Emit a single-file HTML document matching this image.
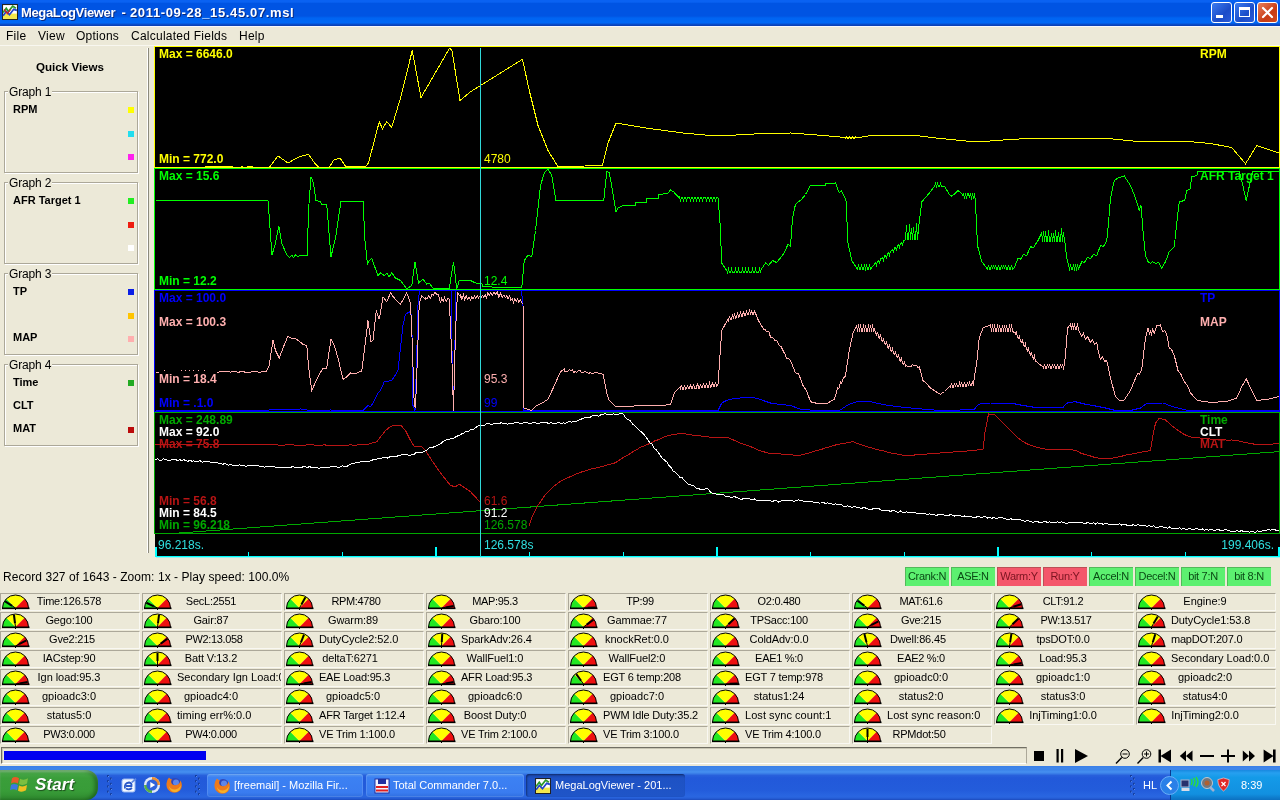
<!DOCTYPE html><html><head><meta charset="utf-8"><title>MegaLogViewer</title><style>
*{box-sizing:border-box}
html,body{margin:0;padding:0}
body{will-change:transform;-webkit-font-smoothing:antialiased;width:1280px;height:800px;position:relative;overflow:hidden;background:#ece9d8;font-family:"Liberation Sans",sans-serif;font-size:12px;color:#000}
.abs{position:absolute}
#title{left:0;top:0;width:1280px;height:26px;background:linear-gradient(180deg,#0a62f2 0,#0a62f2 2px,#0054e3 3.5px,#0054e3 16px,#0064f2 18px,#0068f6 23px,#0850d0 24px,#0a3cb0 26px)}
#title .t{left:21px;top:5px;color:#fff;font-weight:bold;font-size:13px;letter-spacing:0.37px;white-space:nowrap;text-shadow:1px 1px 0 #0a2a80}
.wb{top:2px;width:21px;height:21px;border:1px solid #fff;border-radius:3px;background:linear-gradient(135deg,#3c7cf0,#1c4cc8 60%,#2a5ad8)}
.wb.close{background:linear-gradient(135deg,#e8805c,#c83c14 60%,#d04a20)}
#menu{left:0;top:26px;width:1280px;height:20px;background:#ece9d8;border-top:1px solid #f6f7fc}
#menu span{position:absolute;top:2px;font-size:12px;white-space:nowrap;letter-spacing:0.25px}
#side{left:0;top:46px;width:155px;height:512px;background:#ece9d8}
.gb{position:absolute;left:4px;width:134px;height:82px;border:1px solid #aca899;box-shadow:1px 1px 0 #fff, inset 1px 1px 0 #fff}
.gb .ttl{position:absolute;left:3px;top:-7px;background:#ece9d8;padding:0 1px;font-size:12px;letter-spacing:-0.15px;line-height:14px;white-space:nowrap}
.gb .it{position:absolute;left:8px;font-weight:bold;font-size:11px;line-height:12px;white-space:nowrap}
.gb .sq{position:absolute;left:123px;width:6px;height:6px}
.lbl{position:absolute;font-weight:bold;font-size:12px;line-height:12px;white-space:nowrap}
.val{position:absolute;font-size:12px;line-height:12px;white-space:nowrap}
#status{left:3px;top:570px;font-size:12px;line-height:14px;white-space:nowrap;letter-spacing:0.055px}
.flag{position:absolute;top:567px;width:44px;height:19px;font-size:11px;line-height:19px;text-align:center;white-space:nowrap;overflow:hidden;letter-spacing:-0.3px;box-shadow:inset 1px 1px 0 rgba(60,60,40,.3)}
.cell{position:absolute;width:140px;height:18px;border-top:1px solid #aca899;border-left:1px solid #aca899;border-bottom:1px solid #f9f8f2;border-right:1px solid #f9f8f2;overflow:hidden}
.cell svg{position:absolute;left:0px;top:0px}
.cell .tx{position:absolute;left:34px;top:1px;min-width:68px;width:max-content;text-align:center;font-size:11px;line-height:13px;white-space:nowrap;letter-spacing:-0.05px}
#task{left:0;top:770px;width:1280px;height:30px;background:linear-gradient(180deg,#3c84ea 0,#4690f0 2px,#3a7ee8 3.5px,#2860dc 5.5px,#2259da 8px,#235cdb 20px,#2864e0 25px,#2a66e0 27px,#2258d0 29px,#1c48b8 30px)}
.tb{position:absolute;top:4px;height:23px;border-radius:3px;background:linear-gradient(180deg,#5a9af0 0%,#3c81f3 15%,#3a7cf0 80%,#2f6ee0 100%);box-shadow:inset 0 0 0 1px rgba(255,255,255,.12);color:#fff;font-size:11px;line-height:23px;white-space:nowrap;overflow:hidden}
.tb.act{background:linear-gradient(180deg,#1a47b0 0%,#1e52c4 20%,#1f55c8 100%);box-shadow:inset 1px 1px 2px rgba(0,0,0,.4)}
.tb span{position:absolute;left:27px;top:0}
</style></head><body>
<div id="title" class="abs">
<svg class="abs" style="left:2px;top:4px" width="16" height="16" viewBox="0 0 15 15"><rect x="0.5" y="0.5" width="14" height="14" fill="#fff" stroke="#222"/><rect x="1" y="9" width="13" height="5" fill="#f4e84a"/><polyline points="1,8 4,4 6,7 10,2 13,4" fill="none" stroke="#2a9a2a" stroke-width="1.6"/><polyline points="1,11 4,7 7,10 11,5 14,6" fill="none" stroke="#2244cc" stroke-width="1.6"/><polyline points="2,5 5,9 8,5" fill="none" stroke="#d02020" stroke-width="1.2"/></svg>
<div class="abs t" style="letter-spacing:-0.35px">MegaLogViewer</div><div class="abs t" style="left:121.5px;letter-spacing:0">-</div><div class="abs t" style="left:130px;letter-spacing:0.64px">2011-09-28_15.45.07.msl</div>
<div class="abs wb" style="left:1211px"><div class="abs" style="left:4px;top:12px;width:7px;height:3px;background:#fff"></div></div>
<div class="abs wb" style="left:1234px"><div class="abs" style="left:4px;top:4px;width:11px;height:10px;border:1px solid #fff;border-top-width:3px"></div></div>
<div class="abs wb close" style="left:1257px"><svg width="19" height="19" viewBox="0 0 19 19"><path d="M5 5 L14 14 M14 5 L5 14" stroke="#fff" stroke-width="2.2" stroke-linecap="round"/></svg></div>
</div>
<div id="menu" class="abs">
<span style="left:6px">File</span>
<span style="left:38px">View</span>
<span style="left:76px">Options</span>
<span style="left:131px">Calculated Fields</span>
<span style="left:239px">Help</span>
<div class="abs" style="left:0;top:18px;width:1280px;height:1px;background:#f8f7f0"></div>
</div>
<div id="side" class="abs">
<div class="abs" style="left:0;top:14px;width:140px;text-align:center;font-weight:bold;font-size:11.6px;line-height:14px">Quick Views</div>
<div class="gb" style="top:45px"><div class="ttl">Graph 1</div>
<div class="it" style="top:11px">RPM</div>
<div class="sq" style="top:15px;background:#ffff00"></div>
<div class="sq" style="top:39px;background:#22ddee"></div>
<div class="sq" style="top:62px;background:#ff22ee"></div>
</div>
<div class="gb" style="top:136px"><div class="ttl">Graph 2</div>
<div class="it" style="top:11px">AFR Target 1</div>
<div class="sq" style="top:15px;background:#22ee22"></div>
<div class="sq" style="top:39px;background:#ee1c10"></div>
<div class="sq" style="top:62px;background:#ffffff"></div>
</div>
<div class="gb" style="top:227px"><div class="ttl">Graph 3</div>
<div class="it" style="top:11px">TP</div>
<div class="sq" style="top:15px;background:#0a1ee6"></div>
<div class="sq" style="top:39px;background:#ffc400"></div>
<div class="it" style="top:57px">MAP</div>
<div class="sq" style="top:62px;background:#ffafaf"></div>
</div>
<div class="gb" style="top:318px"><div class="ttl">Graph 4</div>
<div class="it" style="top:11px">Time</div>
<div class="sq" style="top:15px;background:#22aa22"></div>
<div class="it" style="top:34px">CLT</div>
<div class="it" style="top:57px">MAT</div>
<div class="sq" style="top:62px;background:#bb0a0a"></div>
</div>
<div class="abs" style="left:147px;top:2px;width:1px;height:505px;background:#fff"></div><div class="abs" style="left:148px;top:2px;width:1px;height:505px;background:#8c8a7c"></div>
</div>
<div class="abs" style="left:155px;top:47px;width:1125px;height:510px;background:#000"></div>
<svg class="abs" style="left:0;top:0" width="1280" height="800" viewBox="0 0 1280 800" shape-rendering="crispEdges">
<defs><clipPath id="gc"><rect x="154" y="46" width="1126" height="512"/></clipPath></defs>
<g clip-path="url(#gc)"><g transform="translate(0.5,0.5)">
<polyline points="172,533 1280,451" fill="none" stroke="#00a800" stroke-width="1" />
<polyline points="155,444.2 159.13,443.66 163.26,443.76 167.39,444.27 171.52,444.13 175.65,443.47 179.78,443.75 183.91,443.84 188.04,443.68 192.17,443.54 196.3,443.68 200.43,444.09 204.57,443.4 208.7,443.95 212.83,443.84 216.96,443.43 221.09,443.76 225.22,444.06 229.35,443.96 233.48,443.52 237.61,444.45 241.74,444.27 245.87,444.46 250,443.6 254.13,443.81 258.26,443.63 262.39,444.41 266.52,443.94 270.65,443.85 274.78,444.18 278.91,444.72 283.04,444.67 287.17,444.15 291.3,444.08 295.43,444.9 299.57,444.59 303.7,444.77 307.83,444.2 311.96,444.21 316.09,444.88 320.22,444.66 324.35,444.36 328.48,445.26 332.61,445 336.74,445.21 340.87,444.54 345,445.36 349.5,444.32 354,444.86 358.5,444.2 363,443.84 367.5,443.75 376.25,441.25 385,430 390,426 393.75,424.5 400,424.5 405,430 409,438 413.75,446.25 421.25,446.25 425,450 432,461 440,472.5 450,485 455,486.25 458.75,483.75 470,491.25 481,503" fill="none" stroke="#b81414" stroke-width="1" />
<polyline points="528.75,525.03 532,515.26 537.5,504.86 545,493.78 552.5,486.27 560,480.84 565,478.39 570,476.05 575,473.86 580,471.82 585,470.26 590,468.63 594,467.99 598,466.79 602,466 606.33,464.64 610.67,463.57 615,462.21 619,459.6 623,456.71 627.75,454.26 632.5,451.28 640,446.81 645,444.73 650,442.76 654,440.51 658,439.19 662.75,436.96 667.5,435 675,433.7 682.5,432.94 686.67,433.67 690.83,434.45 695,435.29 700,435.41 705,436.2 710,436.62 714.38,436.83 718.75,436.94 723.12,437.16 727.5,437.23 731.75,439.03 736,440.74 740.5,442.89 745,444.35 749,445.8 753,447.25 757,449.2 762.25,450.97 767.5,452.6 771.88,452.74 776.25,453.1 780.62,453.5 785,453.98 789.17,454.13 793.33,454.63 797.5,454.86 801.67,454.28 805.83,453.28 810,452.03 815,450.35 820,449.28 825,447.39 830,446.08 835,444.53 840,443.43 844.17,442.73 848.33,442 852.5,441.07 856.67,442.84 860.83,444.12 865,445.86 870,447.13 875,448.69 880,449.73 885,450.96 890,452.38 895,453.17 900,454.22 905,455.02 910,454.82 915,454.43 920,454.13 924.38,453.85 928.75,453.18 933.12,452.77 937.5,452.79 942,451.99 946.5,452.03 951,451.69 955.5,451.03 960,451.2 964.5,450.79 969,450.18 973.5,449.79 978,449.39 982.5,448.53 984.5,432.01 988,413.5 993.75,413.95 998.12,418.31 1002.5,422.7 1009,429.05 1015,435.24 1021,440.11 1027.5,443.87 1031.75,445.21 1036,446.72 1040.5,447.65 1045,448.67 1050,448.6 1055,449.12 1060,449.04 1065,449.24 1070,449.41 1075,449.61 1081,452.99 1087.5,454.7 1095,457.18 1102.5,458.15 1110,458 1115,457.02 1120,456.1 1125,454.61 1130,453.89 1135,452.73 1140,451.74 1145,450.86 1150,450.14 1152.5,434.82 1155,422.64 1158.75,417.79 1165,419.5 1171,424.93 1177.5,429.99 1184,434.11 1190,436.41 1195,436.95 1200,437.59 1205,437.87 1210,438.54 1214.17,438.81 1218.33,439.31 1222.5,439.26 1226.67,439.62 1230.83,439.5 1235,439.74 1240,440.86 1245,442.1 1250,442.99 1255,443.86 1259.17,443.79 1263.33,444.09 1267.5,444.23 1271.67,443.65 1275.83,442.85 1280,442.5" fill="none" stroke="#b81414" stroke-width="1" />
<polyline points="155,459.46 157.02,458.29 159.05,459.78 161.07,459.79 163.1,458.21 165.12,459.09 167.14,459.83 169.17,460.18 171.19,459.33 173.21,459.08 175.24,459.06 177.26,460.47 179.29,459.23 181.31,459.98 183.33,459.27 185.36,460.04 187.38,460.9 189.4,459.51 191.43,460.83 193.45,460.35 195.48,461.11 197.5,460.87 199.56,460.25 201.62,461.69 203.68,461.18 205.74,460.59 207.79,460.78 209.85,461.9 211.91,462.06 213.97,462.03 216.03,461.97 218.09,462.57 220.15,462.76 222.21,463.94 224.26,462.66 226.32,464.25 228.38,464.64 230.44,463.58 232.5,465.27 234.58,464.98 236.67,465.42 238.75,464.41 240.83,464.66 242.92,464.79 245,465.98 247.08,465.34 249.17,465.03 251.25,465.25 253.33,465.07 255.42,464.76 257.5,464.95 259.58,466.37 261.67,465.48 263.75,466.74 265.83,465.6 267.92,465.73 270,466.27 272.04,465.72 274.07,466.08 276.11,467.15 278.15,467.05 280.19,466.95 282.22,466.65 284.26,467.19 286.3,467.27 288.33,466.59 290.37,466.92 292.41,465.74 294.44,467 296.48,466.52 298.52,467.09 300.56,466.93 302.59,466.31 304.63,465.91 306.67,467.52 308.7,466.11 310.74,466.76 312.78,466.55 314.81,466.5 316.85,467.32 318.89,467.77 320.93,466.51 322.96,467.25 325,466.64 327.14,467 329.29,466.6 331.43,466.08 333.57,465.96 335.71,465.94 337.86,467.09 340,466.24 342.19,465.28 344.38,466.04 346.56,465.74 348.75,464.28 350.94,463.26 353.12,462.88 355.31,462.23 357.5,462.22 359.69,461.3 361.88,461.09 364.06,460.66 366.25,460.75 368.44,460.85 370.62,460.14 372.81,459.06 375,458.59 377.08,458.48 379.17,457.9 381.25,457.52 383.33,456.71 385.42,456.79 387.5,457.72 389.58,455.89 391.67,456.26 393.75,456.17 395.83,456.28 397.92,454.8 400,454.59 402.19,454.3 404.38,454.32 406.56,454.15 408.75,454.82 410.94,454.38 413.12,454.17 415.31,452.39 417.5,452.16 420,452.38 422.5,451.71 425,449.95 427.14,449.09 429.29,446.96 431.43,446.59 433.57,446.48 435.71,445.23 437.86,444.21 440,443.35 442.19,441.11 444.38,439.92 446.56,439.07 448.75,438.79 450.94,438.14 453.12,437.67 455.31,436.34 457.5,435.27 459.58,434.56 461.67,433.09 463.75,432.34 465.83,430.5 467.92,430.92 470,429.02 472,429.36 474,427.96 476,426.45 478,425.23 480,424.55 482,424.95 484,424.76 486,423.4 488,423.03 490,423.54 492.12,423.57 494.23,423.14 496.35,422.77 498.46,423.37 500.58,422.23 502.69,422.68 504.81,422.89 506.92,423.71 509.04,423.07 511.15,423.42 513.27,422.61 515.38,422.1 517.5,422.04 519.57,423.33 521.63,422.87 523.7,422.15 525.76,421.64 527.83,422.5 529.89,422.81 531.96,422.36 534.02,422.06 536.09,422.8 538.15,423.27 540.22,422.01 542.28,421.66 544.35,422.21 546.41,422.36 548.48,422.83 550.54,421.96 552.61,423.03 554.67,422.93 556.74,422.51 558.8,421.97 560.87,423.35 562.93,422.16 565,423.08 567.14,421.59 569.29,421.14 571.43,421.68 573.57,420.42 575.71,421.17 577.86,419.92 580,418.94 582.5,417.92 585,417.18 587.5,416.55 589.64,416.81 591.79,415.11 593.93,415.31 596.07,414.73 598.21,415.85 600.36,414.11 602.5,413.69 604.58,413.42 606.67,413.74 608.75,414.37 610.83,414.06 612.92,413.5 615,413.7 617.5,413.89 620,413.13 622.5,413.18 625,417.03 627.5,419.19 630,420.41 632.14,423.69 634.29,425.32 636.43,427.45 638.57,429.52 640.71,431.37 642.86,433.21 645,435.85 647.14,438.66 649.29,442.43 651.43,443.61 653.57,447.8 655.71,449.12 657.86,452.06 660,455.58 662.14,458.08 664.29,459.88 666.43,461.69 668.57,464.95 670.71,467.27 672.86,470.76 675,471.95 677.14,474.04 679.29,476.79 681.43,477.01 683.57,479.48 685.71,481.99 687.86,483.69 690,484.17 692,484.91 694,485.71 696,488.01 698,487.56 700,489.2 702.5,489.47 705,488.46 707.5,488.34 710,491.7 712.5,493.21 714.58,492.95 716.67,494.14 718.75,493.79 720.83,494.1 722.92,493.98 725,495.71 727.08,496.37 729.17,496.24 731.25,497.17 733.33,495.89 735.42,496.65 737.5,497.46 739.52,498.5 741.55,498.67 743.57,497.83 745.6,497.77 747.62,498.27 749.64,498.56 751.67,499.52 753.69,498.36 755.71,499.65 757.74,499.71 759.76,500.05 761.79,500.13 763.81,500.01 765.83,499.69 767.86,499.85 769.88,500.11 771.9,501.04 773.93,499.96 775.95,500.35 777.98,501.53 780,500.8 782,500.12 784,499.71 786,500.29 788,499.54 790,500.36 792.06,500.37 794.12,500.73 796.18,499.61 798.24,499.46 800.29,499.66 802.35,500.56 804.41,501.11 806.47,500.82 808.53,500.61 810.59,501.12 812.65,501.66 814.71,501.93 816.76,502.24 818.82,502.6 820.88,502.44 822.94,501.64 825,503.11 827,502.43 829,503.22 831,503.17 833,504.13 835,503.46 837,503.85 839,504.14 841,504.28 843,505.89 845,505.64 847.02,505.4 849.05,505.74 851.07,507.03 853.1,506.37 855.12,506.09 857.14,507.34 859.17,507.28 861.19,508.1 863.21,506.71 865.24,507.6 867.26,508.43 869.29,508.68 871.31,509.03 873.33,507.67 875.36,508.34 877.38,508.24 879.4,508.58 881.43,510.21 883.45,509.72 885.48,510.56 887.5,509.77 889.58,510.87 891.67,510.33 893.75,510.19 895.83,511.33 897.92,511.84 900,510.54 902.08,511.63 904.17,511.88 906.25,511.37 908.33,511.85 910.42,511.65 912.5,511.97 914.58,512.27 916.67,513.1 918.75,513.4 920.83,512.8 922.92,512.66 925,513.44 927.06,514.17 929.12,513.39 931.18,513.72 933.24,513.63 935.29,514.8 937.35,514.45 939.41,513.68 941.47,513.86 943.53,514.49 945.59,514.87 947.65,515.13 949.71,514.25 951.76,514.48 953.82,515.54 955.88,515.13 957.94,515.01 960,515.15 962.08,516.43 964.17,515.38 966.25,515.95 968.33,515.69 970.42,515.91 972.5,516.82 974.58,517.17 976.67,516.14 978.75,515.95 980.83,517.02 982.92,516.19 985,515.94 987.08,517.67 989.17,516.92 991.25,517.74 993.33,517.11 995.42,518.08 997.5,517.43 999.58,517.1 1001.67,517.04 1003.75,518.22 1005.83,518.59 1007.92,519.28 1010,518.01 1012.08,519.18 1014.17,518.93 1016.25,519.38 1018.33,518.95 1020.42,519.4 1022.5,520.04 1024.58,520.97 1026.67,519.71 1028.75,520.61 1030.83,521.38 1032.92,521.88 1035,520.71 1037,520.63 1039,522.15 1041,522.26 1043,521.42 1045,520.7 1047,522.32 1049,521.4 1051,522.38 1053,521.92 1055,522.33 1057,521.19 1059,522.36 1061,521.4 1063,521.78 1065,522.62 1067,522.64 1069,521.53 1071,521.64 1073,522.02 1075,522.28 1077,522.09 1079,521.67 1081,521.94 1083,522.85 1085,523.22 1087,521.77 1089,522.81 1091,523.26 1093,522.07 1095,523.61 1097,522.41 1099,523.38 1101,523.39 1103,523.63 1105,523.15 1107,523.46 1109,523.85 1111,523.67 1113,524.19 1115,523.9 1117,523.99 1119,523.34 1121,524.51 1123,524.38 1125,524.02 1127,525.07 1129,525.2 1131,524.72 1133,524.32 1135,524.95 1137,524.41 1139,524.57 1141,525.24 1143,524.75 1145,525.5 1147,525.74 1149,525.01 1151,526.21 1153,525.33 1155,526.62 1157,526.82 1159,526.46 1161,525.76 1163,526.69 1165,526.58 1167,527.73 1169,526.39 1171,527.8 1173,528.17 1175,527.82 1177,528.09 1179,527.09 1181,528.63 1183,527.87 1185,528.82 1187.08,528.86 1189.17,527.62 1191.25,528.85 1193.33,529.22 1195.42,527.77 1197.5,528.4 1199.58,529.24 1201.67,528.27 1203.75,529.71 1205.83,528.71 1207.92,529.79 1210,528.69 1212.08,529.45 1214.17,530.31 1216.25,529.14 1218.33,529.35 1220.42,529.9 1222.5,529.67 1224.53,529.24 1226.56,529.58 1228.59,529.62 1230.62,531.1 1232.66,530.71 1234.69,531.18 1236.72,529.95 1238.75,531.14 1240.78,530.01 1242.81,530.84 1244.84,531.1 1246.88,530.69 1248.91,531.69 1250.94,531.19 1252.97,531.32 1255,531.94 1257.14,530.18 1259.29,531.42 1261.43,530.41 1263.57,529.63 1265.71,530 1267.86,528.68 1270,529.63 1272,529.14 1274,529 1276,529.98 1278,529.65 1280,530" fill="none" stroke="#ffffff" stroke-width="1" />
<polyline points="155,410 265,410 272,409 300,408.5 310,410 330,409.5 345,410 362.5,410 367.5,405 370,406 372.5,402.5 377.5,392.5 380,390 383.75,381.25 391.25,380 394,376 397.5,370 400,347.5 402.5,325 405,313.75 408.75,311.25 411.25,315 412.5,405 414.5,410 416.25,355 417.5,305 419,290 450.5,290 451.5,350 453,410 454.5,340 455.5,290 521,290 522.5,305 523.5,410 717.5,410 721.25,402.5 725,400.5 730,398.75 740,397.5 750,396.75 757,398 762.5,400 770,402.5 780,404 790,405 800,408.75 815,410 830,410 840,409.5 845,406 848.75,403.75 856.25,401.25 870,401.25 885,404.5 900,406.5 915,408 940,410 960,409.5 973.75,408.75 977,405 980,403 990,402.5 1010,402.5 1020,404.5 1035,407 1062.5,407 1065,404 1067.5,402 1075,401.25 1085,403.75 1095,405.5 1105,407.5 1115,410 1130,410 1140,407.5 1146.25,403 1162.5,402.5 1172.5,406.25 1185,409.5 1197.5,410 1280,410" fill="none" stroke="#0000ff" stroke-width="1" />
<polyline points="216,371.32 218,371.77 220,370.74 222,371.44 224,370.97 226,370.89 228,370.79 230,371.93 232,370.91 234,371.1 236,371.33 238,372.09 240,370.83 242,371.38 244,371.5 246,372 248,371.86 250,371.89 252,370.91 254,371.1 256,370.97 258,371.77 260,371.85 262,370.52 264,370.52 266,371 268.75,365 272.5,339.5 275,350 278.75,357.5 282.5,347.5 287.5,335.5 290,337.5 295,338 302.5,343.75 306.25,345 308.25,367.5 311.25,390 316.25,378.75 322.5,367.5 326.25,367.5 328.75,350 330.5,338.75 333.75,345 337.5,357.5 342.5,378.75 346.25,376.25 350,372.5 355,373 361.25,370.5 364.5,345 367.5,320 370.5,341.25 372.5,340 375.75,310 378.75,318.75 382.5,296.25 386.25,301.25 390,292.5 393.75,297.5 400,303.75 406.25,292.5 410,302.5 411.75,342.5 413.75,405 415,407.5 417,355 418.75,302.5 421.25,295 425,298.75 425,296.9 426.67,298.44 428.33,295.07 430,297.8 431.5,293.84 433,294.66 434.62,291.78 436.25,293.87 438.12,294.5 440,302.51 441.33,297.67 442.67,300.99 444,297.15 445.58,300.89 447.17,298.08 448.75,298.75 451.25,355 453,410 455,330 457,292.5 460,296.25 460,293.91 461.43,298.98 462.86,294.25 464.29,299.3 465.71,295.55 467.14,298.75 468.57,296.44 470,299.53 471.33,296.5 472.67,298.01 474,295.86 475.33,297.87 476.67,295.25 478,297.31 479.33,295.63 480.67,297.18 482,295.09 483.33,297.05 484.67,294.41 486,297.29 487.33,292.34 488.67,294.93 490,292.27 491.67,294.76 493.33,291.7 495,293.96 496.67,291.02 498.33,296.79 500,292.82 501.67,296.72 503.33,294.62 505,296.91 506.33,295.16 507.67,298.42 509,295.31 510.33,299.37 511.67,298.17 513,302.2 514.33,298.02 515.67,301.17 517,298.66 518.33,301.59 519.67,299.36 521,301.5 522.5,303.75 523.5,407.5 531.25,410 536.25,405 541,403 547.5,398.75 555,382.5 560,371.25 563.75,368.75 564,371.22 565.57,371.02 567.14,370.63 568.71,369.28 570.29,369.88 571.86,369.37 573.43,371.76 575,371.12 576.43,371.86 577.86,370.1 579.29,369.57 580.71,371.55 582.14,372.03 583.57,371.41 585,371.1 586.67,372.15 588.33,372.86 590,372.02 591.57,373.13 593.14,372.62 594.71,371.52 596.29,371.59 597.86,372.56 599.43,372.56 601,373.5 602.5,373.75 606.25,392.5 608.75,400 615,406.25 616,406.19 619,406.39 622,405.82 625,406.25 628,406.24 631,406.14 634,405.49 637,405.28 640,405.23 643,405.1 646,405 649,405.32 652,405.5 655,405.34 658,404.88 661,404.95 664,405 667,404.18 670,404.5 673.75,392.5 676,390 680,386.25 680,389 681,384.5 682,388.8 683,388.8 684,384.7 685,388.6 686,388.5 687,384.2 688,388.4 689,388.3 690,383.9 691,388.1 692,388 693,383.2 694,387.9 696,387.7 697,382.4 698,387.5 699,387.5 700,383.2 701,387.3 702,387.2 703,382.2 704,387.1 705,387 706,382.7 707,386.8 708,386.7 709,382.8 710,386.6 711,386.5 712,381.6 713,386.3 714,386.2 715,381.3 716,386.1 717.5,383.75 719.5,355 721.25,330 724,325 727.5,318.75 728,320 729,315.4 730,319.4 731,319 732,314 733,318.4 733,318.4 734,312.4 735,317.7 736,317.4 737,311.3 738,316.8 739,316.4 740,310.4 741,315.8 742,315.5 743,310.8 744,314.8 745,314.5 746,309.9 747,314.4 748,314.4 749,308.6 750,314.2 750,314.2 751,309.7 752,314.1 753,314.1 754,309.8 755,314 755,312 757,318 759,322 762.5,327.5 763,328.63 764.4,328.8 765.8,330.99 767.2,330.72 768.6,331.66 770,336.88 771.5,336.85 773,337.61 774.5,340.48 776,339.74 777.5,342.74 778.96,345.35 780.42,345.68 781.88,348.63 783.33,351.59 784.79,354.17 786.25,358.35 788.12,358.04 790,360 795,372.5 798,373 802.5,385 806,390 810,401.25 815,402.5 827.5,402.5 833.75,398.75 836,392 836,392 837,387.5 838,388.2 839,386.3 840,381.6 841,382.6 842,380.7 843,376.6 844,376.9 845,375 848.75,350 852.5,332.5 856.25,325 857,331 858,323.6 859,331 859,331 860,323.7 861,331 862,331 863,323.9 864,331 864,331 865,324.4 866,331 867,331 868,323.7 869,331 869,331 870,324.5 871,331 871,331 872,323.8 873,331 873,331 874,327.9 875,333.2 876,334.3 877,331.2 878,336.5 879,337.6 880,333.7 881,339.8 882,340.8 883,337.6 884,343 885,344.1 886,340.5 887,346.3 888,347.4 889,343.5 890,349.6 891,350.7 892,348 893,352.9 894,354 895,350.3 896,356.2 897,357.2 898,354.1 899,359.4 900,360.5 901,357.7 902,362.7 903,363.8 904,360.7 905,366 905,365 906,365.48 907.5,365.81 909,365.67 910.5,366.1 912,363.82 913.35,365.43 914.7,364.75 916.05,365.08 917.4,366.82 918.75,366.25 922.5,380 926,383 930,387.5 935,391 940,393.75 944,391 950,385 950,387 951,382.7 952,386.8 953,386.7 954,382.5 955,386.6 955,386.6 956,382.6 957,386.4 958,386.3 959,382.6 960,386.1 960,386.1 961,381.7 962,386 963,385.9 964,381.7 965,385.7 966,385.6 967,381.3 968,385.4 968,385.4 969,381.1 970,385.3 971,385.2 972,381.1 973,385 973.75,377.5 976.25,362.5 978.75,337.5 982.5,327.5 986,326 990,324.5 991,331 992,323.7 993,331 993,331 994,323.9 995,331 996,331 997,323.8 998,331 998,331 999,324.5 1000,331 1001,331 1002,324.1 1003,331 1003,331 1004,324.4 1005,331 1005,331 1006,324.5 1007,331 1008,331 1009,323.4 1010,331 1010,331 1011,323.9 1012,331 1015,332.5 1015,334 1016,332.1 1017,336.7 1018,338.1 1019,336 1020,340.8 1021,342.1 1022,339.1 1023,344.8 1024,346.1 1025,343.2 1026,348.9 1027,350.2 1028,347.6 1029,352.9 1030,354.2 1031,351.2 1032,356.9 1033,358.3 1034,355.5 1035,361 1035,360 1038,363 1042.5,366.25 1043,367.5 1044,363.5 1045,367.5 1046,367.5 1047,363.5 1048,367.5 1048,367.5 1049,363.5 1050,367.5 1051,367.5 1052,363.5 1053,367.5 1053,367.5 1054,363.5 1055,367.5 1056,367.5 1057,363.5 1058,367.5 1059,367.5 1060,363.5 1061,367.5 1061,367.5 1062,363.5 1063,367.5 1063.75,365 1065,355 1067,327.5 1070,323.75 1071,329 1072,323 1073,329 1073,329 1074,323 1075,329 1076,329 1077,323 1078,329 1081.25,336.25 1083,333 1085,339 1087,336 1090,342 1092,339 1094,343.5 1096.25,342 1098,352 1100,358.75 1102,356 1104,361 1106.25,360 1108,368 1110,377.5 1115,396.25 1118.75,400 1123.75,399.5 1130,390 1134,380 1137.5,372.5 1139,374 1141.25,368.75 1145,337.5 1147.5,327.5 1149,334 1150,330 1151,335 1152,328.75 1153.75,332.5 1156.25,325 1160,324.5 1162,331.25 1164,330 1166.25,333.75 1168.75,347.5 1171,349 1173.75,355 1177.5,370 1180,373 1183.75,381.25 1187,385 1190,392.5 1196.25,399.5 1203,401 1210,401.75 1225,401.25 1236.25,397.5 1241.25,386.25 1245.75,378.25 1250,387.5 1256.25,400 1267.5,398.75 1280,395.5" fill="none" stroke="#ffafaf" stroke-width="1" />
<polyline points="155,372 158,372" fill="none" stroke="#ffafaf" stroke-width="1" />
<polyline points="163,370 164,370" fill="none" stroke="#ffafaf" stroke-width="1" />
<polyline points="180,370 181,370" fill="none" stroke="#ffafaf" stroke-width="1" />
<polyline points="184,370 185,370" fill="none" stroke="#ffafaf" stroke-width="1" />
<polyline points="188,370 189,370" fill="none" stroke="#ffafaf" stroke-width="1" />
<polyline points="192,370 193,370" fill="none" stroke="#ffafaf" stroke-width="1" />
<polyline points="197,370 198,370" fill="none" stroke="#ffafaf" stroke-width="1" />
<polyline points="203,370 204,370" fill="none" stroke="#ffafaf" stroke-width="1" />
<polyline points="155,200 267.5,200 271.5,254.5 275,242.5 278.25,225.5 281.25,242.5 286.25,254.5 289,257 291.25,254.5 293,257 295,254.5 297.5,256 300,254.5 306.75,254.5 308,210 310.5,176.25 313,182.5 315.5,200 320,201 321.25,203.75 326.25,204.5 330.5,256.25 335,237.5 340.5,200.5 362.5,200.5 364.5,240 367,263.75 368.75,260 371.25,257.5 373.75,265 377.5,275 380,272.5 383.75,275 386.25,272.5 388.75,276.25 391.25,272.5 395,277.5 400,280 406.25,288.5 411.25,285 414.5,261.25 418,282.5 422.5,278.75 426.25,283.75 428.75,282.5 432.5,287.5 448.75,288 453,261.25 456.25,288.5 458.75,280 470,280 475,282.5 481.25,283 482.5,286.25 510,287 521.25,287.5 523.75,260 527.5,254.5 531.25,256.25 535,230 540,185 543.75,172.5 547.5,168.75 551.25,175 555.5,200 603.25,200 606.25,171.25 608.75,172 612,190 615.5,211.25 617.5,207.5 623.75,204.5 635,204.5 635,202 646,202 646.25,197.5 657.5,197.5 657.5,194.5 667.5,192.5 670,189.5 673,191.25 678.75,197.5 679,197 680,200 681,197 682,197 683,200 684,197 685,197 686,200 687,197 689,197 690,200 691,197 692,197 693,200 694,197 695,197 696,200 697,197 698,197 699,200 700,197 701,197 702,200 703,197 705,197 706,200 707,197 708,197 709,200 710,197 711,197 712,200 713,197 714,197 715,200 716,197 717.5,197 719.5,222.5 721.25,262.5 726.25,270 727,272 728,268.5 729,272 730,272 731,268.5 732,272 734,272 735,268.5 736,272 737,272 738,268.5 739,272 741,272 742,268.5 743,272 744,272 745,268.5 746,272 747,272 748,268.5 749,272 751,272 752,268.5 753,272 754,272 755,268.5 756,272 758,272 759,268.5 760,272 760,270 765,262.5 768,265 772,260 776,262 780,257.5 784,252 787.5,243.75 790,246 792,217.5 795,203.75 801.25,198.75 805,194 810,185 825,185 825,183 835,182.5 838.75,192.5 841,190 845.5,200 847.5,242.5 851.25,260 856.25,267.5 857,268.5 858,265 859,268.5 860,268.5 861,265 862,268.5 863,268.5 864,265 865,268.5 865,268.5 866,265 867,268.5 868,268.5 869,265 870,268.5 875,262.5 875,262.5 876,264.8 877,260.9 878,260.2 879,262.3 880,258.6 882,257 883,259.7 884,255.5 885,254.7 886,257.3 887,253.1 888,252.3 889,254.8 890,250.8 892,249.2 893,251.2 894,247.6 895,246.8 896,249.1 897,245.3 898,244.5 899,246.9 900,242.9 901,242.2 902,244.3 903,240.6 903.75,240 905,239 906,224.7 907,239 908,239 909,223.4 910,239 910,239 911,227.4 912,239 912,239 913,226.7 914,239 915,239 916,223 917,239 918.75,221.25 921.25,201.25 925,197 930,191.25 933,187 934,186 935,183 936,186 936,186 937,183 938,186 939,186 940,183 941,186 944,186 948.75,193.75 951,195.5 953.75,194 957.5,190 960,192 962.5,195 963,192.5 964,198 965,192.5 965,192.5 966,198.9 967,192.5 968,192.5 969,197.4 970,192.5 970,192.5 971,199.3 972,192.5 972,192.5 973,198.6 974,192.5 975,202.5 977,245 981.25,261.25 986.25,267.5 987,268.5 988,264.5 989,268.5 990,268.5 991,264.5 992,268.5 992,268.5 993,264.5 994,268.5 994,268.5 995,264.5 996,268.5 997,268.5 998,264.5 999,268.5 1000,268.5 1001,264.5 1002,268.5 1002,268.5 1003,264.5 1004,268.5 1004,268.5 1005,264.5 1006,268.5 1007,268.5 1008,264.5 1009,268.5 1010,268.5 1011,264.5 1012,268.5 1013.75,267.5 1017.5,257.5 1020,259 1023,254 1026.25,255 1030,246.25 1033,247 1037.5,240 1041.25,232.5 1042,241 1043,230.7 1044,241 1044,241 1045,230.7 1046,241 1047,241 1048,229.9 1049,241 1050,241 1051,232.3 1052,241 1052,241 1053,233 1054,241 1054,241 1055,230 1056,241 1057,241 1058,231.2 1059,241 1060,241 1061,227.4 1062,241 1062,241 1063,231.4 1064,241 1064.5,242.5 1066.25,257.5 1068.75,267.5 1069,268.5 1070,265 1071,268.5 1072,268.5 1073,265 1074,268.5 1074,268.5 1075,265 1076,268.5 1076,268.5 1077,265 1078,268.5 1081.25,261.25 1084,262 1087,257 1090,258 1093,254 1096.25,255 1100,245 1103,246 1106.25,240 1108,222.5 1110,197.5 1113.75,180 1117.5,177.5 1123.75,175.5 1130,185 1135,197.5 1138.75,210 1140.5,205 1142.5,230 1145,255 1147.5,261.25 1150,263 1152,261 1155,263 1158,262 1161.25,267.5 1165,261.25 1168.75,251.25 1173.75,246.25 1176.25,222.5 1178.75,201.25 1184.25,200 1186.25,190 1189.5,188.75 1191.25,176.25 1196.25,175 1197.5,171 1238.75,171 1241.25,180 1245.75,200 1250,180 1252.5,171 1280,171" fill="none" stroke="#00ff00" stroke-width="1" />
<polyline points="262,167 268.75,167 277.5,155.5 287.5,162.5 297.5,156.75 308,153.75 315,163.75 318.75,167 328.75,167 333.75,158.75 340,158.25 345,165.75 365,166.25 368,162.5 378.75,121.25 382,128.25 386.25,121.25 391.25,126.75 400,97.5 411.75,50 420.5,97 448.75,48.25 451.25,48.75 459.5,100 470,91.25 522,58.75 528.75,90 537.5,125 547.5,150 557.5,166.25 602,165 607.5,142.5 615.5,122.5 645,127.5 682.5,132.5 710,135 722.5,135.5 745,133.75 790,132.5 822.5,135 845,137 845,137.5 846,136.5 847,137.5 848,137.5 849,136.5 850,137.5 851,137.5 852,136.5 853,137.5 854,137.5 855,136.5 856,137.5 870,135 915,135 940,138 965,140.5 980,141.25 1002.5,139.5 1022.5,138.25 1110,138.25 1135,140.75 1185,140.75 1210,143 1231.25,147 1245,163.25 1256.25,145 1280,153" fill="none" stroke="#ffff00" stroke-width="1" />
<polyline points="204,166 232,166" fill="none" stroke="#ffff00" stroke-width="1" />
<polyline points="240,166 242,166" fill="none" stroke="#ffff00" stroke-width="1" />
<polyline points="246,166 252,166" fill="none" stroke="#ffff00" stroke-width="1" />
<path d="M154 167 L154 46 L1279 46 L1279 167 Z" fill="none" stroke="#ffff00"/>
<path d="M154 289 L154 168 L1279 168 L1279 289 Z" fill="none" stroke="#00ff00"/>
<path d="M154 411 L154 290 L1279 290 L1279 411 Z" fill="none" stroke="#0000ff"/>
<path d="M154 533 L154 412 L1279 412 L1279 533 Z" fill="none" stroke="#00a800"/>
<line x1="155" y1="556" x2="1280" y2="556" stroke="#00ffff"/>
<line x1="155" y1="557" x2="1280" y2="557" stroke="#9af4f0"/>
<line x1="155.5" y1="546" x2="155.5" y2="556" stroke="#00ffff" stroke-width="2"/>
<line x1="248" y1="551" x2="248" y2="556" stroke="#00ffff" stroke-width="1"/>
<line x1="342" y1="551" x2="342" y2="556" stroke="#00ffff" stroke-width="1"/>
<line x1="435" y1="546" x2="435" y2="556" stroke="#00ffff" stroke-width="2"/>
<line x1="529" y1="551" x2="529" y2="556" stroke="#00ffff" stroke-width="1"/>
<line x1="623" y1="551" x2="623" y2="556" stroke="#00ffff" stroke-width="1"/>
<line x1="716" y1="546" x2="716" y2="556" stroke="#00ffff" stroke-width="2"/>
<line x1="810" y1="551" x2="810" y2="556" stroke="#00ffff" stroke-width="1"/>
<line x1="904" y1="551" x2="904" y2="556" stroke="#00ffff" stroke-width="1"/>
<line x1="997" y1="546" x2="997" y2="556" stroke="#00ffff" stroke-width="2"/>
<line x1="1091" y1="551" x2="1091" y2="556" stroke="#00ffff" stroke-width="1"/>
<line x1="1185" y1="551" x2="1185" y2="556" stroke="#00ffff" stroke-width="1"/>
<line x1="1278.5" y1="546" x2="1278.5" y2="556" stroke="#00ffff" stroke-width="2"/>
<line x1="480" y1="47" x2="480" y2="556" stroke="#30d8d8"/>
</g></g></svg>
<div class="lbl" style="left:159px;top:48px;color:#ffff00">Max = 6646.0</div>
<div class="lbl" style="left:159px;top:153px;color:#ffff00">Min = 772.0</div>
<div class="lbl" style="left:1200px;top:48px;color:#ffff00">RPM</div>
<div class="lbl" style="left:159px;top:170px;color:#00ff00">Max = 15.6</div>
<div class="lbl" style="left:159px;top:275px;color:#00ff00">Min = 12.2</div>
<div class="lbl" style="left:1200px;top:170px;color:#00ff00">AFR Target 1</div>
<div class="lbl" style="left:159px;top:292px;color:#0000ff">Max = 100.0</div>
<div class="lbl" style="left:159px;top:316px;color:#ffafaf">Max = 100.3</div>
<div class="lbl" style="left:159px;top:373px;color:#ffafaf">Min = 18.4</div>
<div class="lbl" style="left:159px;top:397px;color:#0000ff">Min = .1.0</div>
<div class="lbl" style="left:1200px;top:292px;color:#0000ff">TP</div>
<div class="lbl" style="left:1200px;top:316px;color:#ffafaf">MAP</div>
<div class="lbl" style="left:159px;top:414px;color:#00a800">Max = 248.89</div>
<div class="lbl" style="left:159px;top:426px;color:#ffffff">Max = 92.0</div>
<div class="lbl" style="left:159px;top:438px;color:#b81414">Max = 75.8</div>
<div class="lbl" style="left:159px;top:495px;color:#b81414">Min = 56.8</div>
<div class="lbl" style="left:159px;top:507px;color:#ffffff">Min = 84.5</div>
<div class="lbl" style="left:159px;top:519px;color:#00a800">Min = 96.218</div>
<div class="lbl" style="left:1200px;top:414px;color:#00a800">Time</div>
<div class="lbl" style="left:1200px;top:426px;color:#ffffff">CLT</div>
<div class="lbl" style="left:1200px;top:438px;color:#b81414">MAT</div>
<div class="val" style="left:484px;top:153px;color:#ffff00">4780</div>
<div class="val" style="left:484px;top:275px;color:#00ff00">12.4</div>
<div class="val" style="left:484px;top:373px;color:#ffafaf">95.3</div>
<div class="val" style="left:484px;top:397px;color:#0000ff">99</div>
<div class="val" style="left:484px;top:495px;color:#b81414">61.6</div>
<div class="val" style="left:484px;top:507px;color:#ffffff">91.2</div>
<div class="val" style="left:484px;top:519px;color:#00a800">126.578</div>
<div class="val" style="left:158px;top:539px;color:#30e0e0">96.218s.</div>
<div class="val" style="left:484px;top:539px;color:#30e0e0">126.578s</div>
<div class="val" style="right:6px;top:539px;color:#30e0e0">199.406s.</div>
<div id="status" class="abs">Record 327 of 1643 - Zoom: 1x - Play speed: 100.0%</div>
<div class="flag" style="left:905px;background:#5cf070;color:#0a4a14">Crank:N</div>
<div class="flag" style="left:951px;background:#5cf070;color:#0a4a14">ASE:N</div>
<div class="flag" style="left:997px;background:#f4566a;color:#7a1420">Warm:Y</div>
<div class="flag" style="left:1043px;background:#f4566a;color:#7a1420">Run:Y</div>
<div class="flag" style="left:1089px;background:#5cf070;color:#0a4a14">Accel:N</div>
<div class="flag" style="left:1135px;background:#5cf070;color:#0a4a14">Decel:N</div>
<div class="flag" style="left:1181px;background:#5cf070;color:#0a4a14">bit 7:N</div>
<div class="flag" style="left:1227px;background:#5cf070;color:#0a4a14">bit 8:N</div>
<div class="cell" style="left:0px;top:593px"><svg width="30" height="17" viewBox="0 0 30 17"><path d="M14.5,14 L1.50,14.00 A13,13 0 0 1 5.31,4.81 Z" fill="#22e822"/><path d="M14.5,14 L5.31,4.81 A13,13 0 0 1 23.69,4.81 Z" fill="#ffff00"/><path d="M14.5,14 L23.69,4.81 A13,13 0 0 1 27.50,14.00 Z" fill="#ee1010"/><path d="M1.50,14.00 A13,13 0 0 1 27.50,14.00" fill="none" stroke="#000" stroke-width="1"/><rect x="1" y="13.5" width="27.5" height="1.6" fill="#000"/><rect x="14" y="15" width="1" height="1.5" fill="#000"/><line x1="11.12" y1="11.86" x2="4.11" y2="7.41" stroke="#000" stroke-width="2"/><line x1="14.50" y1="14.00" x2="11.12" y2="11.86" stroke="#000" stroke-width="1"/></svg><div class="tx" style="left:34px;letter-spacing:-0.204px">Time:126.578</div></div>
<div class="cell" style="left:142px;top:593px"><svg width="30" height="17" viewBox="0 0 30 17"><path d="M14.5,14 L1.50,14.00 A13,13 0 0 1 5.31,4.81 Z" fill="#22e822"/><path d="M14.5,14 L5.31,4.81 A13,13 0 0 1 23.69,4.81 Z" fill="#ffff00"/><path d="M14.5,14 L23.69,4.81 A13,13 0 0 1 27.50,14.00 Z" fill="#ee1010"/><path d="M1.50,14.00 A13,13 0 0 1 27.50,14.00" fill="none" stroke="#000" stroke-width="1"/><rect x="1" y="13.5" width="27.5" height="1.6" fill="#000"/><rect x="14" y="15" width="1" height="1.5" fill="#000"/><line x1="10.88" y1="12.30" x2="3.37" y2="8.76" stroke="#000" stroke-width="2"/><line x1="14.50" y1="14.00" x2="10.88" y2="12.30" stroke="#000" stroke-width="1"/></svg><div class="tx" style="left:34px;letter-spacing:-0.256px">SecL:2551</div></div>
<div class="cell" style="left:284px;top:593px"><svg width="30" height="17" viewBox="0 0 30 17"><path d="M14.5,14 L1.50,14.00 A13,13 0 0 1 5.31,4.81 Z" fill="#22e822"/><path d="M14.5,14 L5.31,4.81 A13,13 0 0 1 23.69,4.81 Z" fill="#ffff00"/><path d="M14.5,14 L23.69,4.81 A13,13 0 0 1 27.50,14.00 Z" fill="#ee1010"/><path d="M1.50,14.00 A13,13 0 0 1 27.50,14.00" fill="none" stroke="#000" stroke-width="1"/><rect x="1" y="13.5" width="27.5" height="1.6" fill="#000"/><rect x="14" y="15" width="1" height="1.5" fill="#000"/><line x1="16.43" y1="10.49" x2="20.43" y2="3.22" stroke="#000" stroke-width="2"/><line x1="14.50" y1="14.00" x2="16.43" y2="10.49" stroke="#000" stroke-width="1"/></svg><div class="tx" style="left:37px;letter-spacing:-0.388px">RPM:4780</div></div>
<div class="cell" style="left:426px;top:593px"><svg width="30" height="17" viewBox="0 0 30 17"><path d="M14.5,14 L1.50,14.00 A13,13 0 0 1 5.31,4.81 Z" fill="#22e822"/><path d="M14.5,14 L5.31,4.81 A13,13 0 0 1 23.69,4.81 Z" fill="#ffff00"/><path d="M14.5,14 L23.69,4.81 A13,13 0 0 1 27.50,14.00 Z" fill="#ee1010"/><path d="M1.50,14.00 A13,13 0 0 1 27.50,14.00" fill="none" stroke="#000" stroke-width="1"/><rect x="1" y="13.5" width="27.5" height="1.6" fill="#000"/><rect x="14" y="15" width="1" height="1.5" fill="#000"/><line x1="18.45" y1="13.37" x2="26.65" y2="12.08" stroke="#000" stroke-width="2"/><line x1="14.50" y1="14.00" x2="18.45" y2="13.37" stroke="#000" stroke-width="1"/></svg><div class="tx" style="left:34px;letter-spacing:-0.338px">MAP:95.3</div></div>
<div class="cell" style="left:568px;top:593px"><svg width="30" height="17" viewBox="0 0 30 17"><path d="M14.5,14 L1.50,14.00 A13,13 0 0 1 5.31,4.81 Z" fill="#22e822"/><path d="M14.5,14 L5.31,4.81 A13,13 0 0 1 23.69,4.81 Z" fill="#ffff00"/><path d="M14.5,14 L23.69,4.81 A13,13 0 0 1 27.50,14.00 Z" fill="#ee1010"/><path d="M1.50,14.00 A13,13 0 0 1 27.50,14.00" fill="none" stroke="#000" stroke-width="1"/><rect x="1" y="13.5" width="27.5" height="1.6" fill="#000"/><rect x="14" y="15" width="1" height="1.5" fill="#000"/><line x1="18.50" y1="13.81" x2="26.79" y2="13.42" stroke="#000" stroke-width="2"/><line x1="14.50" y1="14.00" x2="18.50" y2="13.81" stroke="#000" stroke-width="1"/></svg><div class="tx" style="left:37px;letter-spacing:-0.360px">TP:99</div></div>
<div class="cell" style="left:710px;top:593px"><svg width="30" height="17" viewBox="0 0 30 17"><path d="M14.5,14 L1.50,14.00 A13,13 0 0 1 5.31,4.81 Z" fill="#22e822"/><path d="M14.5,14 L5.31,4.81 A13,13 0 0 1 23.69,4.81 Z" fill="#ffff00"/><path d="M14.5,14 L23.69,4.81 A13,13 0 0 1 27.50,14.00 Z" fill="#ee1010"/><path d="M1.50,14.00 A13,13 0 0 1 27.50,14.00" fill="none" stroke="#000" stroke-width="1"/><rect x="1" y="13.5" width="27.5" height="1.6" fill="#000"/><rect x="14" y="15" width="1" height="1.5" fill="#000"/></svg><div class="tx" style="left:34px;letter-spacing:-0.312px">O2:0.480</div></div>
<div class="cell" style="left:852px;top:593px"><svg width="30" height="17" viewBox="0 0 30 17"><path d="M14.5,14 L1.50,14.00 A13,13 0 0 1 5.31,4.81 Z" fill="#22e822"/><path d="M14.5,14 L5.31,4.81 A13,13 0 0 1 23.69,4.81 Z" fill="#ffff00"/><path d="M14.5,14 L23.69,4.81 A13,13 0 0 1 27.50,14.00 Z" fill="#ee1010"/><path d="M1.50,14.00 A13,13 0 0 1 27.50,14.00" fill="none" stroke="#000" stroke-width="1"/><rect x="1" y="13.5" width="27.5" height="1.6" fill="#000"/><rect x="14" y="15" width="1" height="1.5" fill="#000"/><line x1="11.26" y1="11.65" x2="4.55" y2="6.77" stroke="#000" stroke-width="2"/><line x1="14.50" y1="14.00" x2="11.26" y2="11.65" stroke="#000" stroke-width="1"/></svg><div class="tx" style="left:34px;letter-spacing:-0.338px">MAT:61.6</div></div>
<div class="cell" style="left:994px;top:593px"><svg width="30" height="17" viewBox="0 0 30 17"><path d="M14.5,14 L1.50,14.00 A13,13 0 0 1 5.31,4.81 Z" fill="#22e822"/><path d="M14.5,14 L5.31,4.81 A13,13 0 0 1 23.69,4.81 Z" fill="#ffff00"/><path d="M14.5,14 L23.69,4.81 A13,13 0 0 1 27.50,14.00 Z" fill="#ee1010"/><path d="M1.50,14.00 A13,13 0 0 1 27.50,14.00" fill="none" stroke="#000" stroke-width="1"/><rect x="1" y="13.5" width="27.5" height="1.6" fill="#000"/><rect x="14" y="15" width="1" height="1.5" fill="#000"/><line x1="18.30" y1="12.76" x2="26.20" y2="10.20" stroke="#000" stroke-width="2"/><line x1="14.50" y1="14.00" x2="18.30" y2="12.76" stroke="#000" stroke-width="1"/></svg><div class="tx" style="left:34px;letter-spacing:-0.338px">CLT:91.2</div></div>
<div class="cell" style="left:1136px;top:593px"><svg width="30" height="17" viewBox="0 0 30 17"><path d="M14.5,14 L1.50,14.00 A13,13 0 0 1 5.31,4.81 Z" fill="#22e822"/><path d="M14.5,14 L5.31,4.81 A13,13 0 0 1 23.69,4.81 Z" fill="#ffff00"/><path d="M14.5,14 L23.69,4.81 A13,13 0 0 1 27.50,14.00 Z" fill="#ee1010"/><path d="M1.50,14.00 A13,13 0 0 1 27.50,14.00" fill="none" stroke="#000" stroke-width="1"/><rect x="1" y="13.5" width="27.5" height="1.6" fill="#000"/><rect x="14" y="15" width="1" height="1.5" fill="#000"/></svg><div class="tx" style="left:34px;letter-spacing:-0.019px">Engine:9</div></div>
<div class="cell" style="left:0px;top:612px"><svg width="30" height="17" viewBox="0 0 30 17"><path d="M14.5,14 L1.50,14.00 A13,13 0 0 1 5.31,4.81 Z" fill="#22e822"/><path d="M14.5,14 L5.31,4.81 A13,13 0 0 1 23.69,4.81 Z" fill="#ffff00"/><path d="M14.5,14 L23.69,4.81 A13,13 0 0 1 27.50,14.00 Z" fill="#ee1010"/><path d="M1.50,14.00 A13,13 0 0 1 27.50,14.00" fill="none" stroke="#000" stroke-width="1"/><rect x="1" y="13.5" width="27.5" height="1.6" fill="#000"/><rect x="14" y="15" width="1" height="1.5" fill="#000"/><line x1="14.00" y1="10.03" x2="12.96" y2="1.80" stroke="#000" stroke-width="2"/><line x1="14.50" y1="14.00" x2="14.00" y2="10.03" stroke="#000" stroke-width="1"/></svg><div class="tx" style="left:34px;letter-spacing:-0.156px">Gego:100</div></div>
<div class="cell" style="left:142px;top:612px"><svg width="30" height="17" viewBox="0 0 30 17"><path d="M14.5,14 L1.50,14.00 A13,13 0 0 1 5.31,4.81 Z" fill="#22e822"/><path d="M14.5,14 L5.31,4.81 A13,13 0 0 1 23.69,4.81 Z" fill="#ffff00"/><path d="M14.5,14 L23.69,4.81 A13,13 0 0 1 27.50,14.00 Z" fill="#ee1010"/><path d="M1.50,14.00 A13,13 0 0 1 27.50,14.00" fill="none" stroke="#000" stroke-width="1"/><rect x="1" y="13.5" width="27.5" height="1.6" fill="#000"/><rect x="14" y="15" width="1" height="1.5" fill="#000"/><line x1="15.00" y1="10.03" x2="16.04" y2="1.80" stroke="#000" stroke-width="2"/><line x1="14.50" y1="14.00" x2="15.00" y2="10.03" stroke="#000" stroke-width="1"/></svg><div class="tx" style="left:34px;letter-spacing:-0.121px">Gair:87</div></div>
<div class="cell" style="left:284px;top:612px"><svg width="30" height="17" viewBox="0 0 30 17"><path d="M14.5,14 L1.50,14.00 A13,13 0 0 1 5.31,4.81 Z" fill="#22e822"/><path d="M14.5,14 L5.31,4.81 A13,13 0 0 1 23.69,4.81 Z" fill="#ffff00"/><path d="M14.5,14 L23.69,4.81 A13,13 0 0 1 27.50,14.00 Z" fill="#ee1010"/><path d="M1.50,14.00 A13,13 0 0 1 27.50,14.00" fill="none" stroke="#000" stroke-width="1"/><rect x="1" y="13.5" width="27.5" height="1.6" fill="#000"/><rect x="14" y="15" width="1" height="1.5" fill="#000"/></svg><div class="tx" style="left:34px;letter-spacing:-0.088px">Gwarm:89</div></div>
<div class="cell" style="left:426px;top:612px"><svg width="30" height="17" viewBox="0 0 30 17"><path d="M14.5,14 L1.50,14.00 A13,13 0 0 1 5.31,4.81 Z" fill="#22e822"/><path d="M14.5,14 L5.31,4.81 A13,13 0 0 1 23.69,4.81 Z" fill="#ffff00"/><path d="M14.5,14 L23.69,4.81 A13,13 0 0 1 27.50,14.00 Z" fill="#ee1010"/><path d="M1.50,14.00 A13,13 0 0 1 27.50,14.00" fill="none" stroke="#000" stroke-width="1"/><rect x="1" y="13.5" width="27.5" height="1.6" fill="#000"/><rect x="14" y="15" width="1" height="1.5" fill="#000"/></svg><div class="tx" style="left:34px;letter-spacing:-0.122px">Gbaro:100</div></div>
<div class="cell" style="left:568px;top:612px"><svg width="30" height="17" viewBox="0 0 30 17"><path d="M14.5,14 L1.50,14.00 A13,13 0 0 1 5.31,4.81 Z" fill="#22e822"/><path d="M14.5,14 L5.31,4.81 A13,13 0 0 1 23.69,4.81 Z" fill="#ffff00"/><path d="M14.5,14 L23.69,4.81 A13,13 0 0 1 27.50,14.00 Z" fill="#ee1010"/><path d="M1.50,14.00 A13,13 0 0 1 27.50,14.00" fill="none" stroke="#000" stroke-width="1"/><rect x="1" y="13.5" width="27.5" height="1.6" fill="#000"/><rect x="14" y="15" width="1" height="1.5" fill="#000"/><line x1="17.74" y1="11.65" x2="24.45" y2="6.77" stroke="#000" stroke-width="2"/><line x1="14.50" y1="14.00" x2="17.74" y2="11.65" stroke="#000" stroke-width="1"/></svg><div class="tx" style="left:34px;letter-spacing:-0.061px">Gammae:77</div></div>
<div class="cell" style="left:710px;top:612px"><svg width="30" height="17" viewBox="0 0 30 17"><path d="M14.5,14 L1.50,14.00 A13,13 0 0 1 5.31,4.81 Z" fill="#22e822"/><path d="M14.5,14 L5.31,4.81 A13,13 0 0 1 23.69,4.81 Z" fill="#ffff00"/><path d="M14.5,14 L23.69,4.81 A13,13 0 0 1 27.50,14.00 Z" fill="#ee1010"/><path d="M1.50,14.00 A13,13 0 0 1 27.50,14.00" fill="none" stroke="#000" stroke-width="1"/><rect x="1" y="13.5" width="27.5" height="1.6" fill="#000"/><rect x="14" y="15" width="1" height="1.5" fill="#000"/><line x1="17.42" y1="11.26" x2="23.47" y2="5.58" stroke="#000" stroke-width="2"/><line x1="14.50" y1="14.00" x2="17.42" y2="11.26" stroke="#000" stroke-width="1"/></svg><div class="tx" style="left:34px;letter-spacing:-0.225px">TPSacc:100</div></div>
<div class="cell" style="left:852px;top:612px"><svg width="30" height="17" viewBox="0 0 30 17"><path d="M14.5,14 L1.50,14.00 A13,13 0 0 1 5.31,4.81 Z" fill="#22e822"/><path d="M14.5,14 L5.31,4.81 A13,13 0 0 1 23.69,4.81 Z" fill="#ffff00"/><path d="M14.5,14 L23.69,4.81 A13,13 0 0 1 27.50,14.00 Z" fill="#ee1010"/><path d="M1.50,14.00 A13,13 0 0 1 27.50,14.00" fill="none" stroke="#000" stroke-width="1"/><rect x="1" y="13.5" width="27.5" height="1.6" fill="#000"/><rect x="14" y="15" width="1" height="1.5" fill="#000"/><line x1="18.06" y1="12.18" x2="25.46" y2="8.42" stroke="#000" stroke-width="2"/><line x1="14.50" y1="14.00" x2="18.06" y2="12.18" stroke="#000" stroke-width="1"/></svg><div class="tx" style="left:34px;letter-spacing:-0.200px">Gve:215</div></div>
<div class="cell" style="left:994px;top:612px"><svg width="30" height="17" viewBox="0 0 30 17"><path d="M14.5,14 L1.50,14.00 A13,13 0 0 1 5.31,4.81 Z" fill="#22e822"/><path d="M14.5,14 L5.31,4.81 A13,13 0 0 1 23.69,4.81 Z" fill="#ffff00"/><path d="M14.5,14 L23.69,4.81 A13,13 0 0 1 27.50,14.00 Z" fill="#ee1010"/><path d="M1.50,14.00 A13,13 0 0 1 27.50,14.00" fill="none" stroke="#000" stroke-width="1"/><rect x="1" y="13.5" width="27.5" height="1.6" fill="#000"/><rect x="14" y="15" width="1" height="1.5" fill="#000"/><line x1="17.42" y1="11.26" x2="23.47" y2="5.58" stroke="#000" stroke-width="2"/><line x1="14.50" y1="14.00" x2="17.42" y2="11.26" stroke="#000" stroke-width="1"/></svg><div class="tx" style="left:37px;letter-spacing:-0.333px">PW:13.517</div></div>
<div class="cell" style="left:1136px;top:612px"><svg width="30" height="17" viewBox="0 0 30 17"><path d="M14.5,14 L1.50,14.00 A13,13 0 0 1 5.31,4.81 Z" fill="#22e822"/><path d="M14.5,14 L5.31,4.81 A13,13 0 0 1 23.69,4.81 Z" fill="#ffff00"/><path d="M14.5,14 L23.69,4.81 A13,13 0 0 1 27.50,14.00 Z" fill="#ee1010"/><path d="M1.50,14.00 A13,13 0 0 1 27.50,14.00" fill="none" stroke="#000" stroke-width="1"/><rect x="1" y="13.5" width="27.5" height="1.6" fill="#000"/><rect x="14" y="15" width="1" height="1.5" fill="#000"/><line x1="16.54" y1="10.56" x2="20.76" y2="3.41" stroke="#000" stroke-width="2"/><line x1="14.50" y1="14.00" x2="16.54" y2="10.56" stroke="#000" stroke-width="1"/></svg><div class="tx" style="left:34px;letter-spacing:-0.103px">DutyCycle1:53.8</div></div>
<div class="cell" style="left:0px;top:631px"><svg width="30" height="17" viewBox="0 0 30 17"><path d="M14.5,14 L1.50,14.00 A13,13 0 0 1 5.31,4.81 Z" fill="#22e822"/><path d="M14.5,14 L5.31,4.81 A13,13 0 0 1 23.69,4.81 Z" fill="#ffff00"/><path d="M14.5,14 L23.69,4.81 A13,13 0 0 1 27.50,14.00 Z" fill="#ee1010"/><path d="M1.50,14.00 A13,13 0 0 1 27.50,14.00" fill="none" stroke="#000" stroke-width="1"/><rect x="1" y="13.5" width="27.5" height="1.6" fill="#000"/><rect x="14" y="15" width="1" height="1.5" fill="#000"/><line x1="18.06" y1="12.18" x2="25.46" y2="8.42" stroke="#000" stroke-width="2"/><line x1="14.50" y1="14.00" x2="18.06" y2="12.18" stroke="#000" stroke-width="1"/></svg><div class="tx" style="left:37px;letter-spacing:-0.225px">Gve2:215</div></div>
<div class="cell" style="left:142px;top:631px"><svg width="30" height="17" viewBox="0 0 30 17"><path d="M14.5,14 L1.50,14.00 A13,13 0 0 1 5.31,4.81 Z" fill="#22e822"/><path d="M14.5,14 L5.31,4.81 A13,13 0 0 1 23.69,4.81 Z" fill="#ffff00"/><path d="M14.5,14 L23.69,4.81 A13,13 0 0 1 27.50,14.00 Z" fill="#ee1010"/><path d="M1.50,14.00 A13,13 0 0 1 27.50,14.00" fill="none" stroke="#000" stroke-width="1"/><rect x="1" y="13.5" width="27.5" height="1.6" fill="#000"/><rect x="14" y="15" width="1" height="1.5" fill="#000"/><line x1="17.74" y1="11.65" x2="24.45" y2="6.77" stroke="#000" stroke-width="2"/><line x1="14.50" y1="14.00" x2="17.74" y2="11.65" stroke="#000" stroke-width="1"/></svg><div class="tx" style="left:37px;letter-spacing:-0.340px">PW2:13.058</div></div>
<div class="cell" style="left:284px;top:631px"><svg width="30" height="17" viewBox="0 0 30 17"><path d="M14.5,14 L1.50,14.00 A13,13 0 0 1 5.31,4.81 Z" fill="#22e822"/><path d="M14.5,14 L5.31,4.81 A13,13 0 0 1 23.69,4.81 Z" fill="#ffff00"/><path d="M14.5,14 L23.69,4.81 A13,13 0 0 1 27.50,14.00 Z" fill="#ee1010"/><path d="M1.50,14.00 A13,13 0 0 1 27.50,14.00" fill="none" stroke="#000" stroke-width="1"/><rect x="1" y="13.5" width="27.5" height="1.6" fill="#000"/><rect x="14" y="15" width="1" height="1.5" fill="#000"/><line x1="15.97" y1="10.28" x2="19.03" y2="2.56" stroke="#000" stroke-width="2"/><line x1="14.50" y1="14.00" x2="15.97" y2="10.28" stroke="#000" stroke-width="1"/></svg><div class="tx" style="left:34px;letter-spacing:-0.103px">DutyCycle2:52.0</div></div>
<div class="cell" style="left:426px;top:631px"><svg width="30" height="17" viewBox="0 0 30 17"><path d="M14.5,14 L1.50,14.00 A13,13 0 0 1 5.31,4.81 Z" fill="#22e822"/><path d="M14.5,14 L5.31,4.81 A13,13 0 0 1 23.69,4.81 Z" fill="#ffff00"/><path d="M14.5,14 L23.69,4.81 A13,13 0 0 1 27.50,14.00 Z" fill="#ee1010"/><path d="M1.50,14.00 A13,13 0 0 1 27.50,14.00" fill="none" stroke="#000" stroke-width="1"/><rect x="1" y="13.5" width="27.5" height="1.6" fill="#000"/><rect x="14" y="15" width="1" height="1.5" fill="#000"/><line x1="14.75" y1="10.01" x2="15.27" y2="1.72" stroke="#000" stroke-width="2"/><line x1="14.50" y1="14.00" x2="14.75" y2="10.01" stroke="#000" stroke-width="1"/></svg><div class="tx" style="left:34px;letter-spacing:-0.100px">SparkAdv:26.4</div></div>
<div class="cell" style="left:568px;top:631px"><svg width="30" height="17" viewBox="0 0 30 17"><path d="M14.5,14 L1.50,14.00 A13,13 0 0 1 5.31,4.81 Z" fill="#22e822"/><path d="M14.5,14 L5.31,4.81 A13,13 0 0 1 23.69,4.81 Z" fill="#ffff00"/><path d="M14.5,14 L23.69,4.81 A13,13 0 0 1 27.50,14.00 Z" fill="#ee1010"/><path d="M1.50,14.00 A13,13 0 0 1 27.50,14.00" fill="none" stroke="#000" stroke-width="1"/><rect x="1" y="13.5" width="27.5" height="1.6" fill="#000"/><rect x="14" y="15" width="1" height="1.5" fill="#000"/></svg><div class="tx" style="left:34px;letter-spacing:-0.021px">knockRet:0.0</div></div>
<div class="cell" style="left:710px;top:631px"><svg width="30" height="17" viewBox="0 0 30 17"><path d="M14.5,14 L1.50,14.00 A13,13 0 0 1 5.31,4.81 Z" fill="#22e822"/><path d="M14.5,14 L5.31,4.81 A13,13 0 0 1 23.69,4.81 Z" fill="#ffff00"/><path d="M14.5,14 L23.69,4.81 A13,13 0 0 1 27.50,14.00 Z" fill="#ee1010"/><path d="M1.50,14.00 A13,13 0 0 1 27.50,14.00" fill="none" stroke="#000" stroke-width="1"/><rect x="1" y="13.5" width="27.5" height="1.6" fill="#000"/><rect x="14" y="15" width="1" height="1.5" fill="#000"/></svg><div class="tx" style="left:34px;letter-spacing:-0.095px">ColdAdv:0.0</div></div>
<div class="cell" style="left:852px;top:631px"><svg width="30" height="17" viewBox="0 0 30 17"><path d="M14.5,14 L1.50,14.00 A13,13 0 0 1 5.31,4.81 Z" fill="#22e822"/><path d="M14.5,14 L5.31,4.81 A13,13 0 0 1 23.69,4.81 Z" fill="#ffff00"/><path d="M14.5,14 L23.69,4.81 A13,13 0 0 1 27.50,14.00 Z" fill="#ee1010"/><path d="M1.50,14.00 A13,13 0 0 1 27.50,14.00" fill="none" stroke="#000" stroke-width="1"/><rect x="1" y="13.5" width="27.5" height="1.6" fill="#000"/><rect x="14" y="15" width="1" height="1.5" fill="#000"/><line x1="13.51" y1="10.13" x2="11.44" y2="2.09" stroke="#000" stroke-width="2"/><line x1="14.50" y1="14.00" x2="13.51" y2="10.13" stroke="#000" stroke-width="1"/></svg><div class="tx" style="left:31px;letter-spacing:-0.136px">Dwell:86.45</div></div>
<div class="cell" style="left:994px;top:631px"><svg width="30" height="17" viewBox="0 0 30 17"><path d="M14.5,14 L1.50,14.00 A13,13 0 0 1 5.31,4.81 Z" fill="#22e822"/><path d="M14.5,14 L5.31,4.81 A13,13 0 0 1 23.69,4.81 Z" fill="#ffff00"/><path d="M14.5,14 L23.69,4.81 A13,13 0 0 1 27.50,14.00 Z" fill="#ee1010"/><path d="M1.50,14.00 A13,13 0 0 1 27.50,14.00" fill="none" stroke="#000" stroke-width="1"/><rect x="1" y="13.5" width="27.5" height="1.6" fill="#000"/><rect x="14" y="15" width="1" height="1.5" fill="#000"/><line x1="15.13" y1="10.05" x2="16.42" y2="1.85" stroke="#000" stroke-width="2"/><line x1="14.50" y1="14.00" x2="15.13" y2="10.05" stroke="#000" stroke-width="1"/></svg><div class="tx" style="left:34px;letter-spacing:-0.185px">tpsDOT:0.0</div></div>
<div class="cell" style="left:1136px;top:631px"><svg width="30" height="17" viewBox="0 0 30 17"><path d="M14.5,14 L1.50,14.00 A13,13 0 0 1 5.31,4.81 Z" fill="#22e822"/><path d="M14.5,14 L5.31,4.81 A13,13 0 0 1 23.69,4.81 Z" fill="#ffff00"/><path d="M14.5,14 L23.69,4.81 A13,13 0 0 1 27.50,14.00 Z" fill="#ee1010"/><path d="M1.50,14.00 A13,13 0 0 1 27.50,14.00" fill="none" stroke="#000" stroke-width="1"/><rect x="1" y="13.5" width="27.5" height="1.6" fill="#000"/><rect x="14" y="15" width="1" height="1.5" fill="#000"/><line x1="15.74" y1="10.20" x2="18.30" y2="2.30" stroke="#000" stroke-width="2"/><line x1="14.50" y1="14.00" x2="15.74" y2="10.20" stroke="#000" stroke-width="1"/></svg><div class="tx" style="left:34px;letter-spacing:-0.221px">mapDOT:207.0</div></div>
<div class="cell" style="left:0px;top:650px"><svg width="30" height="17" viewBox="0 0 30 17"><path d="M14.5,14 L1.50,14.00 A13,13 0 0 1 5.31,4.81 Z" fill="#22e822"/><path d="M14.5,14 L5.31,4.81 A13,13 0 0 1 23.69,4.81 Z" fill="#ffff00"/><path d="M14.5,14 L23.69,4.81 A13,13 0 0 1 27.50,14.00 Z" fill="#ee1010"/><path d="M1.50,14.00 A13,13 0 0 1 27.50,14.00" fill="none" stroke="#000" stroke-width="1"/><rect x="1" y="13.5" width="27.5" height="1.6" fill="#000"/><rect x="14" y="15" width="1" height="1.5" fill="#000"/></svg><div class="tx" style="left:34px;letter-spacing:-0.170px">IACstep:90</div></div>
<div class="cell" style="left:142px;top:650px"><svg width="30" height="17" viewBox="0 0 30 17"><path d="M14.5,14 L1.50,14.00 A13,13 0 0 1 5.31,4.81 Z" fill="#22e822"/><path d="M14.5,14 L5.31,4.81 A13,13 0 0 1 23.69,4.81 Z" fill="#ffff00"/><path d="M14.5,14 L23.69,4.81 A13,13 0 0 1 27.50,14.00 Z" fill="#ee1010"/><path d="M1.50,14.00 A13,13 0 0 1 27.50,14.00" fill="none" stroke="#000" stroke-width="1"/><rect x="1" y="13.5" width="27.5" height="1.6" fill="#000"/><rect x="14" y="15" width="1" height="1.5" fill="#000"/><line x1="14.50" y1="10.00" x2="14.50" y2="1.70" stroke="#000" stroke-width="2"/><line x1="14.50" y1="14.00" x2="14.50" y2="10.00" stroke="#000" stroke-width="1"/></svg><div class="tx" style="left:34px;letter-spacing:-0.159px">Batt V:13.2</div></div>
<div class="cell" style="left:284px;top:650px"><svg width="30" height="17" viewBox="0 0 30 17"><path d="M14.5,14 L1.50,14.00 A13,13 0 0 1 5.31,4.81 Z" fill="#22e822"/><path d="M14.5,14 L5.31,4.81 A13,13 0 0 1 23.69,4.81 Z" fill="#ffff00"/><path d="M14.5,14 L23.69,4.81 A13,13 0 0 1 27.50,14.00 Z" fill="#ee1010"/><path d="M1.50,14.00 A13,13 0 0 1 27.50,14.00" fill="none" stroke="#000" stroke-width="1"/><rect x="1" y="13.5" width="27.5" height="1.6" fill="#000"/><rect x="14" y="15" width="1" height="1.5" fill="#000"/></svg><div class="tx" style="left:31px;letter-spacing:-0.123px">deltaT:6271</div></div>
<div class="cell" style="left:426px;top:650px"><svg width="30" height="17" viewBox="0 0 30 17"><path d="M14.5,14 L1.50,14.00 A13,13 0 0 1 5.31,4.81 Z" fill="#22e822"/><path d="M14.5,14 L5.31,4.81 A13,13 0 0 1 23.69,4.81 Z" fill="#ffff00"/><path d="M14.5,14 L23.69,4.81 A13,13 0 0 1 27.50,14.00 Z" fill="#ee1010"/><path d="M1.50,14.00 A13,13 0 0 1 27.50,14.00" fill="none" stroke="#000" stroke-width="1"/><rect x="1" y="13.5" width="27.5" height="1.6" fill="#000"/><rect x="14" y="15" width="1" height="1.5" fill="#000"/></svg><div class="tx" style="left:34px;letter-spacing:-0.082px">WallFuel1:0</div></div>
<div class="cell" style="left:568px;top:650px"><svg width="30" height="17" viewBox="0 0 30 17"><path d="M14.5,14 L1.50,14.00 A13,13 0 0 1 5.31,4.81 Z" fill="#22e822"/><path d="M14.5,14 L5.31,4.81 A13,13 0 0 1 23.69,4.81 Z" fill="#ffff00"/><path d="M14.5,14 L23.69,4.81 A13,13 0 0 1 27.50,14.00 Z" fill="#ee1010"/><path d="M1.50,14.00 A13,13 0 0 1 27.50,14.00" fill="none" stroke="#000" stroke-width="1"/><rect x="1" y="13.5" width="27.5" height="1.6" fill="#000"/><rect x="14" y="15" width="1" height="1.5" fill="#000"/></svg><div class="tx" style="left:34px;letter-spacing:-0.082px">WallFuel2:0</div></div>
<div class="cell" style="left:710px;top:650px"><svg width="30" height="17" viewBox="0 0 30 17"><path d="M14.5,14 L1.50,14.00 A13,13 0 0 1 5.31,4.81 Z" fill="#22e822"/><path d="M14.5,14 L5.31,4.81 A13,13 0 0 1 23.69,4.81 Z" fill="#ffff00"/><path d="M14.5,14 L23.69,4.81 A13,13 0 0 1 27.50,14.00 Z" fill="#ee1010"/><path d="M1.50,14.00 A13,13 0 0 1 27.50,14.00" fill="none" stroke="#000" stroke-width="1"/><rect x="1" y="13.5" width="27.5" height="1.6" fill="#000"/><rect x="14" y="15" width="1" height="1.5" fill="#000"/></svg><div class="tx" style="left:34px;letter-spacing:-0.287px">EAE1 %:0</div></div>
<div class="cell" style="left:852px;top:650px"><svg width="30" height="17" viewBox="0 0 30 17"><path d="M14.5,14 L1.50,14.00 A13,13 0 0 1 5.31,4.81 Z" fill="#22e822"/><path d="M14.5,14 L5.31,4.81 A13,13 0 0 1 23.69,4.81 Z" fill="#ffff00"/><path d="M14.5,14 L23.69,4.81 A13,13 0 0 1 27.50,14.00 Z" fill="#ee1010"/><path d="M1.50,14.00 A13,13 0 0 1 27.50,14.00" fill="none" stroke="#000" stroke-width="1"/><rect x="1" y="13.5" width="27.5" height="1.6" fill="#000"/><rect x="14" y="15" width="1" height="1.5" fill="#000"/></svg><div class="tx" style="left:34px;letter-spacing:-0.287px">EAE2 %:0</div></div>
<div class="cell" style="left:994px;top:650px"><svg width="30" height="17" viewBox="0 0 30 17"><path d="M14.5,14 L1.50,14.00 A13,13 0 0 1 5.31,4.81 Z" fill="#22e822"/><path d="M14.5,14 L5.31,4.81 A13,13 0 0 1 23.69,4.81 Z" fill="#ffff00"/><path d="M14.5,14 L23.69,4.81 A13,13 0 0 1 27.50,14.00 Z" fill="#ee1010"/><path d="M1.50,14.00 A13,13 0 0 1 27.50,14.00" fill="none" stroke="#000" stroke-width="1"/><rect x="1" y="13.5" width="27.5" height="1.6" fill="#000"/><rect x="14" y="15" width="1" height="1.5" fill="#000"/><line x1="18.45" y1="13.37" x2="26.65" y2="12.08" stroke="#000" stroke-width="2"/><line x1="14.50" y1="14.00" x2="18.45" y2="13.37" stroke="#000" stroke-width="1"/></svg><div class="tx" style="left:34px;letter-spacing:-0.139px">Load:95.3</div></div>
<div class="cell" style="left:1136px;top:650px"><svg width="30" height="17" viewBox="0 0 30 17"><path d="M14.5,14 L1.50,14.00 A13,13 0 0 1 5.31,4.81 Z" fill="#22e822"/><path d="M14.5,14 L5.31,4.81 A13,13 0 0 1 23.69,4.81 Z" fill="#ffff00"/><path d="M14.5,14 L23.69,4.81 A13,13 0 0 1 27.50,14.00 Z" fill="#ee1010"/><path d="M1.50,14.00 A13,13 0 0 1 27.50,14.00" fill="none" stroke="#000" stroke-width="1"/><rect x="1" y="13.5" width="27.5" height="1.6" fill="#000"/><rect x="14" y="15" width="1" height="1.5" fill="#000"/></svg><div class="tx" style="left:34px;letter-spacing:-0.008px">Secondary Load:0.0</div></div>
<div class="cell" style="left:0px;top:669px"><svg width="30" height="17" viewBox="0 0 30 17"><path d="M14.5,14 L1.50,14.00 A13,13 0 0 1 5.31,4.81 Z" fill="#22e822"/><path d="M14.5,14 L5.31,4.81 A13,13 0 0 1 23.69,4.81 Z" fill="#ffff00"/><path d="M14.5,14 L23.69,4.81 A13,13 0 0 1 27.50,14.00 Z" fill="#ee1010"/><path d="M1.50,14.00 A13,13 0 0 1 27.50,14.00" fill="none" stroke="#000" stroke-width="1"/><rect x="1" y="13.5" width="27.5" height="1.6" fill="#000"/><rect x="14" y="15" width="1" height="1.5" fill="#000"/><line x1="18.45" y1="13.37" x2="26.65" y2="12.08" stroke="#000" stroke-width="2"/><line x1="14.50" y1="14.00" x2="18.45" y2="13.37" stroke="#000" stroke-width="1"/></svg><div class="tx" style="left:34px;letter-spacing:-0.062px">Ign load:95.3</div></div>
<div class="cell" style="left:142px;top:669px"><svg width="30" height="17" viewBox="0 0 30 17"><path d="M14.5,14 L1.50,14.00 A13,13 0 0 1 5.31,4.81 Z" fill="#22e822"/><path d="M14.5,14 L5.31,4.81 A13,13 0 0 1 23.69,4.81 Z" fill="#ffff00"/><path d="M14.5,14 L23.69,4.81 A13,13 0 0 1 27.50,14.00 Z" fill="#ee1010"/><path d="M1.50,14.00 A13,13 0 0 1 27.50,14.00" fill="none" stroke="#000" stroke-width="1"/><rect x="1" y="13.5" width="27.5" height="1.6" fill="#000"/><rect x="14" y="15" width="1" height="1.5" fill="#000"/></svg><div class="tx" style="left:34px;letter-spacing:0.003px">Secondary Ign Load:0</div></div>
<div class="cell" style="left:284px;top:669px"><svg width="30" height="17" viewBox="0 0 30 17"><path d="M14.5,14 L1.50,14.00 A13,13 0 0 1 5.31,4.81 Z" fill="#22e822"/><path d="M14.5,14 L5.31,4.81 A13,13 0 0 1 23.69,4.81 Z" fill="#ffff00"/><path d="M14.5,14 L23.69,4.81 A13,13 0 0 1 27.50,14.00 Z" fill="#ee1010"/><path d="M1.50,14.00 A13,13 0 0 1 27.50,14.00" fill="none" stroke="#000" stroke-width="1"/><rect x="1" y="13.5" width="27.5" height="1.6" fill="#000"/><rect x="14" y="15" width="1" height="1.5" fill="#000"/><line x1="18.45" y1="13.37" x2="26.65" y2="12.08" stroke="#000" stroke-width="2"/><line x1="14.50" y1="14.00" x2="18.45" y2="13.37" stroke="#000" stroke-width="1"/></svg><div class="tx" style="left:34px;letter-spacing:-0.212px">EAE Load:95.3</div></div>
<div class="cell" style="left:426px;top:669px"><svg width="30" height="17" viewBox="0 0 30 17"><path d="M14.5,14 L1.50,14.00 A13,13 0 0 1 5.31,4.81 Z" fill="#22e822"/><path d="M14.5,14 L5.31,4.81 A13,13 0 0 1 23.69,4.81 Z" fill="#ffff00"/><path d="M14.5,14 L23.69,4.81 A13,13 0 0 1 27.50,14.00 Z" fill="#ee1010"/><path d="M1.50,14.00 A13,13 0 0 1 27.50,14.00" fill="none" stroke="#000" stroke-width="1"/><rect x="1" y="13.5" width="27.5" height="1.6" fill="#000"/><rect x="14" y="15" width="1" height="1.5" fill="#000"/><line x1="18.45" y1="13.37" x2="26.65" y2="12.08" stroke="#000" stroke-width="2"/><line x1="14.50" y1="14.00" x2="18.45" y2="13.37" stroke="#000" stroke-width="1"/></svg><div class="tx" style="left:34px;letter-spacing:-0.212px">AFR Load:95.3</div></div>
<div class="cell" style="left:568px;top:669px"><svg width="30" height="17" viewBox="0 0 30 17"><path d="M14.5,14 L1.50,14.00 A13,13 0 0 1 5.31,4.81 Z" fill="#22e822"/><path d="M14.5,14 L5.31,4.81 A13,13 0 0 1 23.69,4.81 Z" fill="#ffff00"/><path d="M14.5,14 L23.69,4.81 A13,13 0 0 1 27.50,14.00 Z" fill="#ee1010"/><path d="M1.50,14.00 A13,13 0 0 1 27.50,14.00" fill="none" stroke="#000" stroke-width="1"/><rect x="1" y="13.5" width="27.5" height="1.6" fill="#000"/><rect x="14" y="15" width="1" height="1.5" fill="#000"/><line x1="12.15" y1="10.76" x2="7.27" y2="4.05" stroke="#000" stroke-width="2"/><line x1="14.50" y1="14.00" x2="12.15" y2="10.76" stroke="#000" stroke-width="1"/></svg><div class="tx" style="left:34px;letter-spacing:-0.179px">EGT 6 temp:208</div></div>
<div class="cell" style="left:710px;top:669px"><svg width="30" height="17" viewBox="0 0 30 17"><path d="M14.5,14 L1.50,14.00 A13,13 0 0 1 5.31,4.81 Z" fill="#22e822"/><path d="M14.5,14 L5.31,4.81 A13,13 0 0 1 23.69,4.81 Z" fill="#ffff00"/><path d="M14.5,14 L23.69,4.81 A13,13 0 0 1 27.50,14.00 Z" fill="#ee1010"/><path d="M1.50,14.00 A13,13 0 0 1 27.50,14.00" fill="none" stroke="#000" stroke-width="1"/><rect x="1" y="13.5" width="27.5" height="1.6" fill="#000"/><rect x="14" y="15" width="1" height="1.5" fill="#000"/><line x1="18.50" y1="13.87" x2="26.79" y2="13.61" stroke="#000" stroke-width="2"/><line x1="14.50" y1="14.00" x2="18.50" y2="13.87" stroke="#000" stroke-width="1"/></svg><div class="tx" style="left:34px;letter-spacing:-0.179px">EGT 7 temp:978</div></div>
<div class="cell" style="left:852px;top:669px"><svg width="30" height="17" viewBox="0 0 30 17"><path d="M14.5,14 L1.50,14.00 A13,13 0 0 1 5.31,4.81 Z" fill="#22e822"/><path d="M14.5,14 L5.31,4.81 A13,13 0 0 1 23.69,4.81 Z" fill="#ffff00"/><path d="M14.5,14 L23.69,4.81 A13,13 0 0 1 27.50,14.00 Z" fill="#ee1010"/><path d="M1.50,14.00 A13,13 0 0 1 27.50,14.00" fill="none" stroke="#000" stroke-width="1"/><rect x="1" y="13.5" width="27.5" height="1.6" fill="#000"/><rect x="14" y="15" width="1" height="1.5" fill="#000"/></svg><div class="tx" style="left:34px;letter-spacing:0.025px">gpioadc0:0</div></div>
<div class="cell" style="left:994px;top:669px"><svg width="30" height="17" viewBox="0 0 30 17"><path d="M14.5,14 L1.50,14.00 A13,13 0 0 1 5.31,4.81 Z" fill="#22e822"/><path d="M14.5,14 L5.31,4.81 A13,13 0 0 1 23.69,4.81 Z" fill="#ffff00"/><path d="M14.5,14 L23.69,4.81 A13,13 0 0 1 27.50,14.00 Z" fill="#ee1010"/><path d="M1.50,14.00 A13,13 0 0 1 27.50,14.00" fill="none" stroke="#000" stroke-width="1"/><rect x="1" y="13.5" width="27.5" height="1.6" fill="#000"/><rect x="14" y="15" width="1" height="1.5" fill="#000"/></svg><div class="tx" style="left:34px;letter-spacing:0.025px">gpioadc1:0</div></div>
<div class="cell" style="left:1136px;top:669px"><svg width="30" height="17" viewBox="0 0 30 17"><path d="M14.5,14 L1.50,14.00 A13,13 0 0 1 5.31,4.81 Z" fill="#22e822"/><path d="M14.5,14 L5.31,4.81 A13,13 0 0 1 23.69,4.81 Z" fill="#ffff00"/><path d="M14.5,14 L23.69,4.81 A13,13 0 0 1 27.50,14.00 Z" fill="#ee1010"/><path d="M1.50,14.00 A13,13 0 0 1 27.50,14.00" fill="none" stroke="#000" stroke-width="1"/><rect x="1" y="13.5" width="27.5" height="1.6" fill="#000"/><rect x="14" y="15" width="1" height="1.5" fill="#000"/></svg><div class="tx" style="left:34px;letter-spacing:0.025px">gpioadc2:0</div></div>
<div class="cell" style="left:0px;top:688px"><svg width="30" height="17" viewBox="0 0 30 17"><path d="M14.5,14 L1.50,14.00 A13,13 0 0 1 5.31,4.81 Z" fill="#22e822"/><path d="M14.5,14 L5.31,4.81 A13,13 0 0 1 23.69,4.81 Z" fill="#ffff00"/><path d="M14.5,14 L23.69,4.81 A13,13 0 0 1 27.50,14.00 Z" fill="#ee1010"/><path d="M1.50,14.00 A13,13 0 0 1 27.50,14.00" fill="none" stroke="#000" stroke-width="1"/><rect x="1" y="13.5" width="27.5" height="1.6" fill="#000"/><rect x="14" y="15" width="1" height="1.5" fill="#000"/></svg><div class="tx" style="left:34px;letter-spacing:0.025px">gpioadc3:0</div></div>
<div class="cell" style="left:142px;top:688px"><svg width="30" height="17" viewBox="0 0 30 17"><path d="M14.5,14 L1.50,14.00 A13,13 0 0 1 5.31,4.81 Z" fill="#22e822"/><path d="M14.5,14 L5.31,4.81 A13,13 0 0 1 23.69,4.81 Z" fill="#ffff00"/><path d="M14.5,14 L23.69,4.81 A13,13 0 0 1 27.50,14.00 Z" fill="#ee1010"/><path d="M1.50,14.00 A13,13 0 0 1 27.50,14.00" fill="none" stroke="#000" stroke-width="1"/><rect x="1" y="13.5" width="27.5" height="1.6" fill="#000"/><rect x="14" y="15" width="1" height="1.5" fill="#000"/></svg><div class="tx" style="left:34px;letter-spacing:0.025px">gpioadc4:0</div></div>
<div class="cell" style="left:284px;top:688px"><svg width="30" height="17" viewBox="0 0 30 17"><path d="M14.5,14 L1.50,14.00 A13,13 0 0 1 5.31,4.81 Z" fill="#22e822"/><path d="M14.5,14 L5.31,4.81 A13,13 0 0 1 23.69,4.81 Z" fill="#ffff00"/><path d="M14.5,14 L23.69,4.81 A13,13 0 0 1 27.50,14.00 Z" fill="#ee1010"/><path d="M1.50,14.00 A13,13 0 0 1 27.50,14.00" fill="none" stroke="#000" stroke-width="1"/><rect x="1" y="13.5" width="27.5" height="1.6" fill="#000"/><rect x="14" y="15" width="1" height="1.5" fill="#000"/></svg><div class="tx" style="left:34px;letter-spacing:0.025px">gpioadc5:0</div></div>
<div class="cell" style="left:426px;top:688px"><svg width="30" height="17" viewBox="0 0 30 17"><path d="M14.5,14 L1.50,14.00 A13,13 0 0 1 5.31,4.81 Z" fill="#22e822"/><path d="M14.5,14 L5.31,4.81 A13,13 0 0 1 23.69,4.81 Z" fill="#ffff00"/><path d="M14.5,14 L23.69,4.81 A13,13 0 0 1 27.50,14.00 Z" fill="#ee1010"/><path d="M1.50,14.00 A13,13 0 0 1 27.50,14.00" fill="none" stroke="#000" stroke-width="1"/><rect x="1" y="13.5" width="27.5" height="1.6" fill="#000"/><rect x="14" y="15" width="1" height="1.5" fill="#000"/></svg><div class="tx" style="left:34px;letter-spacing:0.025px">gpioadc6:0</div></div>
<div class="cell" style="left:568px;top:688px"><svg width="30" height="17" viewBox="0 0 30 17"><path d="M14.5,14 L1.50,14.00 A13,13 0 0 1 5.31,4.81 Z" fill="#22e822"/><path d="M14.5,14 L5.31,4.81 A13,13 0 0 1 23.69,4.81 Z" fill="#ffff00"/><path d="M14.5,14 L23.69,4.81 A13,13 0 0 1 27.50,14.00 Z" fill="#ee1010"/><path d="M1.50,14.00 A13,13 0 0 1 27.50,14.00" fill="none" stroke="#000" stroke-width="1"/><rect x="1" y="13.5" width="27.5" height="1.6" fill="#000"/><rect x="14" y="15" width="1" height="1.5" fill="#000"/></svg><div class="tx" style="left:34px;letter-spacing:0.025px">gpioadc7:0</div></div>
<div class="cell" style="left:710px;top:688px"><svg width="30" height="17" viewBox="0 0 30 17"><path d="M14.5,14 L1.50,14.00 A13,13 0 0 1 5.31,4.81 Z" fill="#22e822"/><path d="M14.5,14 L5.31,4.81 A13,13 0 0 1 23.69,4.81 Z" fill="#ffff00"/><path d="M14.5,14 L23.69,4.81 A13,13 0 0 1 27.50,14.00 Z" fill="#ee1010"/><path d="M1.50,14.00 A13,13 0 0 1 27.50,14.00" fill="none" stroke="#000" stroke-width="1"/><rect x="1" y="13.5" width="27.5" height="1.6" fill="#000"/><rect x="14" y="15" width="1" height="1.5" fill="#000"/></svg><div class="tx" style="left:34px;letter-spacing:-0.030px">status1:24</div></div>
<div class="cell" style="left:852px;top:688px"><svg width="30" height="17" viewBox="0 0 30 17"><path d="M14.5,14 L1.50,14.00 A13,13 0 0 1 5.31,4.81 Z" fill="#22e822"/><path d="M14.5,14 L5.31,4.81 A13,13 0 0 1 23.69,4.81 Z" fill="#ffff00"/><path d="M14.5,14 L23.69,4.81 A13,13 0 0 1 27.50,14.00 Z" fill="#ee1010"/><path d="M1.50,14.00 A13,13 0 0 1 27.50,14.00" fill="none" stroke="#000" stroke-width="1"/><rect x="1" y="13.5" width="27.5" height="1.6" fill="#000"/><rect x="14" y="15" width="1" height="1.5" fill="#000"/></svg><div class="tx" style="left:34px;letter-spacing:0.011px">status2:0</div></div>
<div class="cell" style="left:994px;top:688px"><svg width="30" height="17" viewBox="0 0 30 17"><path d="M14.5,14 L1.50,14.00 A13,13 0 0 1 5.31,4.81 Z" fill="#22e822"/><path d="M14.5,14 L5.31,4.81 A13,13 0 0 1 23.69,4.81 Z" fill="#ffff00"/><path d="M14.5,14 L23.69,4.81 A13,13 0 0 1 27.50,14.00 Z" fill="#ee1010"/><path d="M1.50,14.00 A13,13 0 0 1 27.50,14.00" fill="none" stroke="#000" stroke-width="1"/><rect x="1" y="13.5" width="27.5" height="1.6" fill="#000"/><rect x="14" y="15" width="1" height="1.5" fill="#000"/></svg><div class="tx" style="left:34px;letter-spacing:0.011px">status3:0</div></div>
<div class="cell" style="left:1136px;top:688px"><svg width="30" height="17" viewBox="0 0 30 17"><path d="M14.5,14 L1.50,14.00 A13,13 0 0 1 5.31,4.81 Z" fill="#22e822"/><path d="M14.5,14 L5.31,4.81 A13,13 0 0 1 23.69,4.81 Z" fill="#ffff00"/><path d="M14.5,14 L23.69,4.81 A13,13 0 0 1 27.50,14.00 Z" fill="#ee1010"/><path d="M1.50,14.00 A13,13 0 0 1 27.50,14.00" fill="none" stroke="#000" stroke-width="1"/><rect x="1" y="13.5" width="27.5" height="1.6" fill="#000"/><rect x="14" y="15" width="1" height="1.5" fill="#000"/></svg><div class="tx" style="left:34px;letter-spacing:0.011px">status4:0</div></div>
<div class="cell" style="left:0px;top:707px"><svg width="30" height="17" viewBox="0 0 30 17"><path d="M14.5,14 L1.50,14.00 A13,13 0 0 1 5.31,4.81 Z" fill="#22e822"/><path d="M14.5,14 L5.31,4.81 A13,13 0 0 1 23.69,4.81 Z" fill="#ffff00"/><path d="M14.5,14 L23.69,4.81 A13,13 0 0 1 27.50,14.00 Z" fill="#ee1010"/><path d="M1.50,14.00 A13,13 0 0 1 27.50,14.00" fill="none" stroke="#000" stroke-width="1"/><rect x="1" y="13.5" width="27.5" height="1.6" fill="#000"/><rect x="14" y="15" width="1" height="1.5" fill="#000"/></svg><div class="tx" style="left:34px;letter-spacing:0.011px">status5:0</div></div>
<div class="cell" style="left:142px;top:707px"><svg width="30" height="17" viewBox="0 0 30 17"><path d="M14.5,14 L1.50,14.00 A13,13 0 0 1 5.31,4.81 Z" fill="#22e822"/><path d="M14.5,14 L5.31,4.81 A13,13 0 0 1 23.69,4.81 Z" fill="#ffff00"/><path d="M14.5,14 L23.69,4.81 A13,13 0 0 1 27.50,14.00 Z" fill="#ee1010"/><path d="M1.50,14.00 A13,13 0 0 1 27.50,14.00" fill="none" stroke="#000" stroke-width="1"/><rect x="1" y="13.5" width="27.5" height="1.6" fill="#000"/><rect x="14" y="15" width="1" height="1.5" fill="#000"/></svg><div class="tx" style="left:34px;letter-spacing:0.037px">timing err%:0.0</div></div>
<div class="cell" style="left:284px;top:707px"><svg width="30" height="17" viewBox="0 0 30 17"><path d="M14.5,14 L1.50,14.00 A13,13 0 0 1 5.31,4.81 Z" fill="#22e822"/><path d="M14.5,14 L5.31,4.81 A13,13 0 0 1 23.69,4.81 Z" fill="#ffff00"/><path d="M14.5,14 L23.69,4.81 A13,13 0 0 1 27.50,14.00 Z" fill="#ee1010"/><path d="M1.50,14.00 A13,13 0 0 1 27.50,14.00" fill="none" stroke="#000" stroke-width="1"/><rect x="1" y="13.5" width="27.5" height="1.6" fill="#000"/><rect x="14" y="15" width="1" height="1.5" fill="#000"/></svg><div class="tx" style="left:34px;letter-spacing:-0.168px">AFR Target 1:12.4</div></div>
<div class="cell" style="left:426px;top:707px"><svg width="30" height="17" viewBox="0 0 30 17"><path d="M14.5,14 L1.50,14.00 A13,13 0 0 1 5.31,4.81 Z" fill="#22e822"/><path d="M14.5,14 L5.31,4.81 A13,13 0 0 1 23.69,4.81 Z" fill="#ffff00"/><path d="M14.5,14 L23.69,4.81 A13,13 0 0 1 27.50,14.00 Z" fill="#ee1010"/><path d="M1.50,14.00 A13,13 0 0 1 27.50,14.00" fill="none" stroke="#000" stroke-width="1"/><rect x="1" y="13.5" width="27.5" height="1.6" fill="#000"/><rect x="14" y="15" width="1" height="1.5" fill="#000"/></svg><div class="tx" style="left:34px;letter-spacing:-0.029px">Boost Duty:0</div></div>
<div class="cell" style="left:568px;top:707px"><svg width="30" height="17" viewBox="0 0 30 17"><path d="M14.5,14 L1.50,14.00 A13,13 0 0 1 5.31,4.81 Z" fill="#22e822"/><path d="M14.5,14 L5.31,4.81 A13,13 0 0 1 23.69,4.81 Z" fill="#ffff00"/><path d="M14.5,14 L23.69,4.81 A13,13 0 0 1 27.50,14.00 Z" fill="#ee1010"/><path d="M1.50,14.00 A13,13 0 0 1 27.50,14.00" fill="none" stroke="#000" stroke-width="1"/><rect x="1" y="13.5" width="27.5" height="1.6" fill="#000"/><rect x="14" y="15" width="1" height="1.5" fill="#000"/></svg><div class="tx" style="left:34px;letter-spacing:-0.156px">PWM Idle Duty:35.2</div></div>
<div class="cell" style="left:710px;top:707px"><svg width="30" height="17" viewBox="0 0 30 17"><path d="M14.5,14 L1.50,14.00 A13,13 0 0 1 5.31,4.81 Z" fill="#22e822"/><path d="M14.5,14 L5.31,4.81 A13,13 0 0 1 23.69,4.81 Z" fill="#ffff00"/><path d="M14.5,14 L23.69,4.81 A13,13 0 0 1 27.50,14.00 Z" fill="#ee1010"/><path d="M1.50,14.00 A13,13 0 0 1 27.50,14.00" fill="none" stroke="#000" stroke-width="1"/><rect x="1" y="13.5" width="27.5" height="1.6" fill="#000"/><rect x="14" y="15" width="1" height="1.5" fill="#000"/></svg><div class="tx" style="left:34px;letter-spacing:0.053px">Lost sync count:1</div></div>
<div class="cell" style="left:852px;top:707px"><svg width="30" height="17" viewBox="0 0 30 17"><path d="M14.5,14 L1.50,14.00 A13,13 0 0 1 5.31,4.81 Z" fill="#22e822"/><path d="M14.5,14 L5.31,4.81 A13,13 0 0 1 23.69,4.81 Z" fill="#ffff00"/><path d="M14.5,14 L23.69,4.81 A13,13 0 0 1 27.50,14.00 Z" fill="#ee1010"/><path d="M1.50,14.00 A13,13 0 0 1 27.50,14.00" fill="none" stroke="#000" stroke-width="1"/><rect x="1" y="13.5" width="27.5" height="1.6" fill="#000"/><rect x="14" y="15" width="1" height="1.5" fill="#000"/></svg><div class="tx" style="left:34px;letter-spacing:0.058px">Lost sync reason:0</div></div>
<div class="cell" style="left:994px;top:707px"><svg width="30" height="17" viewBox="0 0 30 17"><path d="M14.5,14 L1.50,14.00 A13,13 0 0 1 5.31,4.81 Z" fill="#22e822"/><path d="M14.5,14 L5.31,4.81 A13,13 0 0 1 23.69,4.81 Z" fill="#ffff00"/><path d="M14.5,14 L23.69,4.81 A13,13 0 0 1 27.50,14.00 Z" fill="#ee1010"/><path d="M1.50,14.00 A13,13 0 0 1 27.50,14.00" fill="none" stroke="#000" stroke-width="1"/><rect x="1" y="13.5" width="27.5" height="1.6" fill="#000"/><rect x="14" y="15" width="1" height="1.5" fill="#000"/></svg><div class="tx" style="left:34px;letter-spacing:-0.082px">InjTiming1:0.0</div></div>
<div class="cell" style="left:1136px;top:707px"><svg width="30" height="17" viewBox="0 0 30 17"><path d="M14.5,14 L1.50,14.00 A13,13 0 0 1 5.31,4.81 Z" fill="#22e822"/><path d="M14.5,14 L5.31,4.81 A13,13 0 0 1 23.69,4.81 Z" fill="#ffff00"/><path d="M14.5,14 L23.69,4.81 A13,13 0 0 1 27.50,14.00 Z" fill="#ee1010"/><path d="M1.50,14.00 A13,13 0 0 1 27.50,14.00" fill="none" stroke="#000" stroke-width="1"/><rect x="1" y="13.5" width="27.5" height="1.6" fill="#000"/><rect x="14" y="15" width="1" height="1.5" fill="#000"/></svg><div class="tx" style="left:34px;letter-spacing:-0.082px">InjTiming2:0.0</div></div>
<div class="cell" style="left:0px;top:726px"><svg width="30" height="17" viewBox="0 0 30 17"><path d="M14.5,14 L1.50,14.00 A13,13 0 0 1 5.31,4.81 Z" fill="#22e822"/><path d="M14.5,14 L5.31,4.81 A13,13 0 0 1 23.69,4.81 Z" fill="#ffff00"/><path d="M14.5,14 L23.69,4.81 A13,13 0 0 1 27.50,14.00 Z" fill="#ee1010"/><path d="M1.50,14.00 A13,13 0 0 1 27.50,14.00" fill="none" stroke="#000" stroke-width="1"/><rect x="1" y="13.5" width="27.5" height="1.6" fill="#000"/><rect x="14" y="15" width="1" height="1.5" fill="#000"/></svg><div class="tx" style="left:34px;letter-spacing:-0.333px">PW3:0.000</div></div>
<div class="cell" style="left:142px;top:726px"><svg width="30" height="17" viewBox="0 0 30 17"><path d="M14.5,14 L1.50,14.00 A13,13 0 0 1 5.31,4.81 Z" fill="#22e822"/><path d="M14.5,14 L5.31,4.81 A13,13 0 0 1 23.69,4.81 Z" fill="#ffff00"/><path d="M14.5,14 L23.69,4.81 A13,13 0 0 1 27.50,14.00 Z" fill="#ee1010"/><path d="M1.50,14.00 A13,13 0 0 1 27.50,14.00" fill="none" stroke="#000" stroke-width="1"/><rect x="1" y="13.5" width="27.5" height="1.6" fill="#000"/><rect x="14" y="15" width="1" height="1.5" fill="#000"/></svg><div class="tx" style="left:34px;letter-spacing:-0.333px">PW4:0.000</div></div>
<div class="cell" style="left:284px;top:726px"><svg width="30" height="17" viewBox="0 0 30 17"><path d="M14.5,14 L1.50,14.00 A13,13 0 0 1 5.31,4.81 Z" fill="#22e822"/><path d="M14.5,14 L5.31,4.81 A13,13 0 0 1 23.69,4.81 Z" fill="#ffff00"/><path d="M14.5,14 L23.69,4.81 A13,13 0 0 1 27.50,14.00 Z" fill="#ee1010"/><path d="M1.50,14.00 A13,13 0 0 1 27.50,14.00" fill="none" stroke="#000" stroke-width="1"/><rect x="1" y="13.5" width="27.5" height="1.6" fill="#000"/><rect x="14" y="15" width="1" height="1.5" fill="#000"/></svg><div class="tx" style="left:34px;letter-spacing:-0.203px">VE Trim 1:100.0</div></div>
<div class="cell" style="left:426px;top:726px"><svg width="30" height="17" viewBox="0 0 30 17"><path d="M14.5,14 L1.50,14.00 A13,13 0 0 1 5.31,4.81 Z" fill="#22e822"/><path d="M14.5,14 L5.31,4.81 A13,13 0 0 1 23.69,4.81 Z" fill="#ffff00"/><path d="M14.5,14 L23.69,4.81 A13,13 0 0 1 27.50,14.00 Z" fill="#ee1010"/><path d="M1.50,14.00 A13,13 0 0 1 27.50,14.00" fill="none" stroke="#000" stroke-width="1"/><rect x="1" y="13.5" width="27.5" height="1.6" fill="#000"/><rect x="14" y="15" width="1" height="1.5" fill="#000"/></svg><div class="tx" style="left:34px;letter-spacing:-0.203px">VE Trim 2:100.0</div></div>
<div class="cell" style="left:568px;top:726px"><svg width="30" height="17" viewBox="0 0 30 17"><path d="M14.5,14 L1.50,14.00 A13,13 0 0 1 5.31,4.81 Z" fill="#22e822"/><path d="M14.5,14 L5.31,4.81 A13,13 0 0 1 23.69,4.81 Z" fill="#ffff00"/><path d="M14.5,14 L23.69,4.81 A13,13 0 0 1 27.50,14.00 Z" fill="#ee1010"/><path d="M1.50,14.00 A13,13 0 0 1 27.50,14.00" fill="none" stroke="#000" stroke-width="1"/><rect x="1" y="13.5" width="27.5" height="1.6" fill="#000"/><rect x="14" y="15" width="1" height="1.5" fill="#000"/></svg><div class="tx" style="left:34px;letter-spacing:-0.203px">VE Trim 3:100.0</div></div>
<div class="cell" style="left:710px;top:726px"><svg width="30" height="17" viewBox="0 0 30 17"><path d="M14.5,14 L1.50,14.00 A13,13 0 0 1 5.31,4.81 Z" fill="#22e822"/><path d="M14.5,14 L5.31,4.81 A13,13 0 0 1 23.69,4.81 Z" fill="#ffff00"/><path d="M14.5,14 L23.69,4.81 A13,13 0 0 1 27.50,14.00 Z" fill="#ee1010"/><path d="M1.50,14.00 A13,13 0 0 1 27.50,14.00" fill="none" stroke="#000" stroke-width="1"/><rect x="1" y="13.5" width="27.5" height="1.6" fill="#000"/><rect x="14" y="15" width="1" height="1.5" fill="#000"/></svg><div class="tx" style="left:34px;letter-spacing:-0.203px">VE Trim 4:100.0</div></div>
<div class="cell" style="left:852px;top:726px"><svg width="30" height="17" viewBox="0 0 30 17"><path d="M14.5,14 L1.50,14.00 A13,13 0 0 1 5.31,4.81 Z" fill="#22e822"/><path d="M14.5,14 L5.31,4.81 A13,13 0 0 1 23.69,4.81 Z" fill="#ffff00"/><path d="M14.5,14 L23.69,4.81 A13,13 0 0 1 27.50,14.00 Z" fill="#ee1010"/><path d="M1.50,14.00 A13,13 0 0 1 27.50,14.00" fill="none" stroke="#000" stroke-width="1"/><rect x="1" y="13.5" width="27.5" height="1.6" fill="#000"/><rect x="14" y="15" width="1" height="1.5" fill="#000"/><line x1="14.50" y1="10.00" x2="14.50" y2="1.70" stroke="#000" stroke-width="2"/><line x1="14.50" y1="14.00" x2="14.50" y2="10.00" stroke="#000" stroke-width="1"/></svg><div class="tx" style="left:32px;letter-spacing:-0.206px">RPMdot:50</div></div>
<div class="abs" style="left:1px;top:747px;width:1026px;height:17px;border-top:1px solid #716f64;border-left:1px solid #716f64;border-bottom:1px solid #fff;border-right:1px solid #aca899;box-shadow:inset 1px 1px 0 #c8c5b2"></div>
<div class="abs" style="left:4px;top:751px;width:202px;height:9px;background:#0000f0"></div>
<svg class="abs" style="left:1030px;top:746px" width="250" height="20" viewBox="1030 746 250 20">
<rect x="1034" y="751" width="10" height="10" fill="#000"/>
<rect x="1056.5" y="749" width="2.2" height="13.5" fill="#000"/><rect x="1061" y="749" width="2.2" height="13.5" fill="#000"/>
<path d="M1075 749 L1088 756 L1075 763 Z" fill="#000"/>
<circle cx="1125" cy="754" r="4.3" fill="none" stroke="#000" stroke-width="1"/><line x1="1121.8" y1="757.5" x2="1116" y2="763.5" stroke="#000" stroke-width="1.4"/><line x1="1122.5" y1="754" x2="1127.5" y2="754" stroke="#000" stroke-width="1"/>
<circle cx="1146.5" cy="754" r="4.3" fill="none" stroke="#000" stroke-width="1"/><line x1="1143.3" y1="757.5" x2="1137.5" y2="763.5" stroke="#000" stroke-width="1.4"/><line x1="1144.0" y1="754" x2="1149.0" y2="754" stroke="#000" stroke-width="1"/>
<line x1="1146.5" y1="751.5" x2="1146.5" y2="756.5" stroke="#000" stroke-width="1"/>
<rect x="1158.5" y="749.5" width="2.5" height="13" fill="#000"/><path d="M1171 749.5 L1171 762.5 L1160.5 756 Z" fill="#000"/>
<path d="M1186 750.5 L1186 761.5 L1179.8 756 Z M1192.5 750.5 L1192.5 761.5 L1186 756 Z" fill="#000"/>
<rect x="1200" y="755" width="14" height="2" fill="#000"/>
<rect x="1221" y="755" width="14" height="2" fill="#000"/><rect x="1227" y="749.5" width="2" height="13" fill="#000"/>
<path d="M1242.8 750.5 L1242.8 761.5 L1249 756 Z M1249 750.5 L1249 761.5 L1255 756 Z" fill="#000"/>
<path d="M1263.6 749.5 L1263.6 762.5 L1273.5 756 Z" fill="#000"/><rect x="1273" y="749.5" width="2.6" height="13" fill="#000"/>
</svg>
<div class="abs" style="left:0;top:766px;width:1280px;height:4px;background:linear-gradient(180deg,#3a7ee6,#3f86ea 50%,#3c84ea)"></div>
<div id="task" class="abs">
<div class="abs" style="left:0;top:0;width:98px;height:30px;border-radius:0 12px 12px 0;background:linear-gradient(180deg,#63b563 0%,#45a545 12%,#3a9e3a 28%,#389c38 70%,#2f8a2f 100%);box-shadow:inset -3px 0 4px rgba(0,40,0,.45), inset 0 2px 2px rgba(255,255,255,.25)"></div>
<svg class="abs" style="left:10px;top:5px" width="20" height="19" viewBox="0 0 20 18" preserveAspectRatio="none"><path d="M2 3 Q5 1 9 3 L8 8 Q4 6 1 8 Z" fill="#e85a28"/><path d="M10 3.5 Q14 5.5 18 3 L17 8 Q13 10.5 9 8.5 Z" fill="#7cc040"/><path d="M1 9.5 Q4 7.5 8 9.5 L7 14.5 Q3 12.5 0 14.5 Z" fill="#3c78e0"/><path d="M9 10 Q13 12 17 9.5 L16 14.5 Q12 17 8 15 Z" fill="#f0c020"/></svg>
<div class="abs" style="left:35px;top:5px;color:#fff;font-weight:bold;font-style:italic;font-size:17px;line-height:20px;letter-spacing:0.1px;text-shadow:1px 1px 1px rgba(0,0,0,.5)">Start</div>
<svg class="abs" style="left:107px;top:4px" width="6" height="23" viewBox="0 0 6 23"><rect x="0" y="1.0" width="2" height="2" fill="#153c9c"/><rect x="1" y="2.0" width="1" height="1" fill="#5a8ef0"/><rect x="3" y="3.6" width="2" height="2" fill="#153c9c"/><rect x="4" y="4.6" width="1" height="1" fill="#5a8ef0"/><rect x="0" y="6.2" width="2" height="2" fill="#153c9c"/><rect x="1" y="7.2" width="1" height="1" fill="#5a8ef0"/><rect x="3" y="8.8" width="2" height="2" fill="#153c9c"/><rect x="4" y="9.8" width="1" height="1" fill="#5a8ef0"/><rect x="0" y="11.4" width="2" height="2" fill="#153c9c"/><rect x="1" y="12.4" width="1" height="1" fill="#5a8ef0"/><rect x="3" y="14.0" width="2" height="2" fill="#153c9c"/><rect x="4" y="15.0" width="1" height="1" fill="#5a8ef0"/><rect x="0" y="16.6" width="2" height="2" fill="#153c9c"/><rect x="1" y="17.6" width="1" height="1" fill="#5a8ef0"/><rect x="3" y="19.2" width="2" height="2" fill="#153c9c"/><rect x="4" y="20.2" width="1" height="1" fill="#5a8ef0"/></svg>
<svg class="abs" style="left:195px;top:4px" width="6" height="23" viewBox="0 0 6 23"><rect x="0" y="1.0" width="2" height="2" fill="#153c9c"/><rect x="1" y="2.0" width="1" height="1" fill="#5a8ef0"/><rect x="3" y="3.6" width="2" height="2" fill="#153c9c"/><rect x="4" y="4.6" width="1" height="1" fill="#5a8ef0"/><rect x="0" y="6.2" width="2" height="2" fill="#153c9c"/><rect x="1" y="7.2" width="1" height="1" fill="#5a8ef0"/><rect x="3" y="8.8" width="2" height="2" fill="#153c9c"/><rect x="4" y="9.8" width="1" height="1" fill="#5a8ef0"/><rect x="0" y="11.4" width="2" height="2" fill="#153c9c"/><rect x="1" y="12.4" width="1" height="1" fill="#5a8ef0"/><rect x="3" y="14.0" width="2" height="2" fill="#153c9c"/><rect x="4" y="15.0" width="1" height="1" fill="#5a8ef0"/><rect x="0" y="16.6" width="2" height="2" fill="#153c9c"/><rect x="1" y="17.6" width="1" height="1" fill="#5a8ef0"/><rect x="3" y="19.2" width="2" height="2" fill="#153c9c"/><rect x="4" y="20.2" width="1" height="1" fill="#5a8ef0"/></svg>
<svg class="abs" style="left:1130px;top:4px" width="6" height="23" viewBox="0 0 6 23"><rect x="0" y="1.0" width="2" height="2" fill="#153c9c"/><rect x="1" y="2.0" width="1" height="1" fill="#5a8ef0"/><rect x="3" y="3.6" width="2" height="2" fill="#153c9c"/><rect x="4" y="4.6" width="1" height="1" fill="#5a8ef0"/><rect x="0" y="6.2" width="2" height="2" fill="#153c9c"/><rect x="1" y="7.2" width="1" height="1" fill="#5a8ef0"/><rect x="3" y="8.8" width="2" height="2" fill="#153c9c"/><rect x="4" y="9.8" width="1" height="1" fill="#5a8ef0"/><rect x="0" y="11.4" width="2" height="2" fill="#153c9c"/><rect x="1" y="12.4" width="1" height="1" fill="#5a8ef0"/><rect x="3" y="14.0" width="2" height="2" fill="#153c9c"/><rect x="4" y="15.0" width="1" height="1" fill="#5a8ef0"/><rect x="0" y="16.6" width="2" height="2" fill="#153c9c"/><rect x="1" y="17.6" width="1" height="1" fill="#5a8ef0"/><rect x="3" y="19.2" width="2" height="2" fill="#153c9c"/><rect x="4" y="20.2" width="1" height="1" fill="#5a8ef0"/></svg>
<svg class="abs" style="left:120px;top:6px" width="18" height="18" viewBox="0 0 18 18"><rect x="2" y="3" width="13" height="13" rx="2" fill="#f4f8ff" stroke="#9ab8f0" stroke-width="1"/><path d="M5 12.5 Q4 7 9 6.5 Q12 7 11.5 10 L6 10 M6 12.5 Q9 14.5 12 12" stroke="#2a58c8" stroke-width="1.8" fill="none"/><path d="M11 6 L15.5 2 L16.5 3.5 L12.5 7Z" fill="#6088e0"/></svg>
<svg class="abs" style="left:143px;top:6px" width="18" height="18" viewBox="0 0 18 18"><circle cx="9" cy="9" r="8" fill="#dfe8f8"/><path d="M9 1 A8 8 0 0 1 17 9 L9 9Z" fill="#f09030"/><path d="M1 9 A8 8 0 0 0 9 17 L9 9Z" fill="#58b048"/><circle cx="9" cy="9" r="5.6" fill="#2f62dc"/><path d="M7.3 6 L12.2 9 L7.3 12 Z" fill="#fff"/></svg>
<svg class="abs" style="left:165px;top:6px" width="18" height="18" viewBox="0 0 18 18"><circle cx="10" cy="8" r="6" fill="#2f48b8"/><circle cx="11" cy="6.5" r="3" fill="#5f86e8"/><path d="M4 1.5 Q5 3 7 3.5 Q5 6 7.5 8.5 Q10 10 13 8.5 Q15 7 15.5 4.5 Q18.5 10 15 14.5 Q11 18 6 16 Q1 13.5 1.5 7.5 Q2 3.5 4 1.5Z" fill="#ee7a1a"/><path d="M3.5 9 Q5 13.5 10 13.5 Q14 13 16 9 Q16 14 11.5 16 Q5 17 3.5 9Z" fill="#f8b028"/></svg>
<div class="tb" style="left:207px;width:156px"><svg class="abs" style="left:6px;top:3px" width="18" height="18" viewBox="0 0 18 18"><circle cx="10" cy="8" r="6" fill="#2f48b8"/><circle cx="11" cy="6.5" r="3" fill="#5f86e8"/><path d="M4 1.5 Q5 3 7 3.5 Q5 6 7.5 8.5 Q10 10 13 8.5 Q15 7 15.5 4.5 Q18.5 10 15 14.5 Q11 18 6 16 Q1 13.5 1.5 7.5 Q2 3.5 4 1.5Z" fill="#ee7a1a"/><path d="M3.5 9 Q5 13.5 10 13.5 Q14 13 16 9 Q16 14 11.5 16 Q5 17 3.5 9Z" fill="#f8b028"/></svg><span>[freemail] - Mozilla Fir...</span></div>
<div class="tb" style="left:366px;width:158px"><svg class="abs" style="left:8px;top:4px" width="16" height="16" viewBox="0 0 16 16"><rect x="1" y="1" width="14" height="14" fill="#f4f4ff" stroke="#2030a0"/><rect x="4" y="1" width="8" height="5" fill="#2030a0"/><rect x="2" y="8" width="12" height="2" fill="#e02020"/><rect x="2" y="11.5" width="12" height="2" fill="#e02020"/></svg><span>Total Commander 7.0...</span></div>
<div class="tb act" style="left:526px;width:159px"><svg class="abs" style="left:9px;top:4px" width="16" height="16" viewBox="0 0 15 15"><rect x="0.5" y="0.5" width="14" height="14" fill="#fff" stroke="#222"/><rect x="1" y="9" width="13" height="5" fill="#f4e84a"/><polyline points="1,8 4,4 6,7 10,2 13,4" fill="none" stroke="#2a9a2a" stroke-width="1.6"/><polyline points="1,11 4,7 7,10 11,5 14,6" fill="none" stroke="#2244cc" stroke-width="1.6"/></svg><span style="left:29px">MegaLogViewer - 201...</span></div>
<div class="abs" style="left:1143px;top:8px;color:#fff;font-size:11px;line-height:14px">HL</div>
<div class="abs" style="left:1170px;top:0;width:110px;height:30px;background:linear-gradient(180deg,#1888e0 0%,#26a0f0 10%,#149ae8 25%,#1290e0 80%,#0c70c0 100%);box-shadow:inset 1px 0 0 #0a3a90"></div>
<svg class="abs" style="left:1160px;top:6px" width="19" height="19" viewBox="0 0 19 19"><circle cx="9.5" cy="9.5" r="9" fill="#2a80e8" stroke="#68b0f8" stroke-width="1"/><path d="M11.5 5.5 L7.5 9.5 L11.5 13.5" stroke="#fff" stroke-width="2" fill="none"/></svg>
<svg class="abs" style="left:1180px;top:6px" width="20" height="18" viewBox="0 0 20 18"><rect x="1" y="4" width="8" height="7" fill="#28306c" stroke="#a8b4d0"/><rect x="1.5" y="12" width="8" height="3" fill="#d8dce8"/><path d="M11 9 Q13 6 11 3 M13.5 10 Q16.5 6 13.5 2 M16 11 Q20 6 16 1" stroke="#30e030" stroke-width="1.3" fill="none"/></svg>
<svg class="abs" style="left:1199px;top:6px" width="18" height="18" viewBox="0 0 18 18"><circle cx="8" cy="7" r="5.5" fill="#707880" stroke="#c0c8d0"/><circle cx="8" cy="7" r="2.5" fill="#b06030"/><path d="M11 11 L15 15" stroke="#a0b0d0" stroke-width="2.5"/></svg>
<svg class="abs" style="left:1217px;top:7px" width="13" height="15" viewBox="0 0 16 18"><path d="M8 1 L15 3 Q15 12 8 17 Q1 12 1 3 Z" fill="#e02828" stroke="#f8d0d0" stroke-width=".8"/><path d="M5.5 6 L10.5 11 M10.5 6 L5.5 11" stroke="#fff" stroke-width="1.6"/></svg>
<div class="abs" style="left:1241px;top:8px;color:#fff;font-size:11px;line-height:14px">8:39</div>
</div>
</body></html>
